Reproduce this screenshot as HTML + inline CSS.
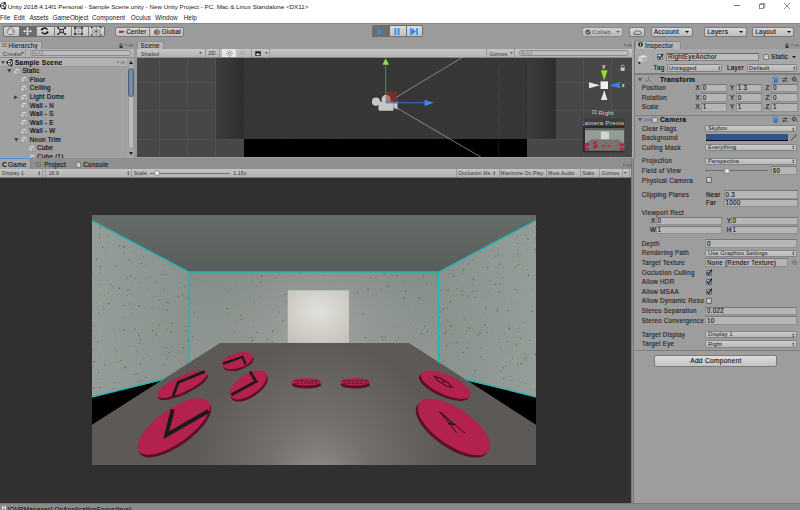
<!DOCTYPE html>
<html><head><meta charset="utf-8">
<style>
*{margin:0;padding:0;box-sizing:border-box}
html,body{width:800px;height:510px;overflow:hidden;background:#9d9d9d;font-family:"Liberation Sans",sans-serif;color:#111}
.a{position:absolute}
.t{position:absolute;white-space:nowrap;line-height:1;letter-spacing:0.15px;-webkit-text-stroke:0.12px currentColor}
.btn{position:absolute;border:1px solid #7a7a7a;border-radius:2px;background:linear-gradient(#dedede,#c4c4c4)}
.fld{position:absolute;border:1px solid #8c8c8c;border-top-color:#6f6f6f;background:#b4b4b4}
.drp{position:absolute;border:1px solid #868686;border-radius:2px;background:linear-gradient(#cdcdcd,#b9b9b9)}
svg{position:absolute;overflow:visible}
</style></head><body>
<div class="a" style="left:0px;top:0px;width:800px;height:22.5px;background:#fff"></div>
<svg style="left:-0.6px;top:1.6px" width="7.6" height="7.6" viewBox="0 0 14 14"><polygon points="1.2,7 5,2.2 11,1 13,7 11,13 5,11.8" fill="#f4f4f4" stroke="#222" stroke-width="1.6" stroke-linejoin="round"/><path d="M8.4,7 L1.2,7 M8.4,7 L11,1 M8.4,7 L11,13" stroke="#222" stroke-width="1.6"/><circle cx="1.6" cy="7" r="1.3" fill="#000"/><circle cx="11" cy="1.6" r="1.3" fill="#000"/><circle cx="11" cy="12.4" r="1.3" fill="#000"/></svg>
<div class="t" style="left:7.7px;top:4.12px;font-size:6.24px;color:#1a1a1a;letter-spacing:0;-webkit-text-stroke:0">Unity 2018.4.14f1 Personal - Sample Scene.unity - New Unity Project - PC, Mac &amp; Linux Standalone &lt;DX11&gt;</div>
<div class="a" style="left:734.2px;top:5.2px;width:5.8px;height:0.9px;background:#777"></div>
<svg style="left:758.8px;top:2.8px" width="6.4" height="6" viewBox="0 0 12.8 12"><rect x="1" y="3.2" width="8" height="8" fill="none" stroke="#666" stroke-width="1.5"/><path d="M3.5,3.2 V1 H11.8 V8.8 H9" fill="none" stroke="#666" stroke-width="1.4"/></svg>
<svg style="left:784px;top:2.7px" width="6" height="6" viewBox="0 0 6 6"><path d="M0,0 L6,6 M6,0 L0,6" stroke="#666" stroke-width="0.75"/></svg>
<div class="t" style="left:0px;top:15.18px;font-size:6.40px;color:#1a1a1a;letter-spacing:0;-webkit-text-stroke:0">File</div>
<div class="t" style="left:13.8px;top:15.18px;font-size:6.40px;color:#1a1a1a;letter-spacing:0;-webkit-text-stroke:0">Edit</div>
<div class="t" style="left:29.4px;top:15.18px;font-size:6.40px;color:#1a1a1a;letter-spacing:0;-webkit-text-stroke:0">Assets</div>
<div class="t" style="left:52.5px;top:15.18px;font-size:6.40px;color:#1a1a1a;letter-spacing:0;-webkit-text-stroke:0">GameObject</div>
<div class="t" style="left:92px;top:15.18px;font-size:6.40px;color:#1a1a1a;letter-spacing:0;-webkit-text-stroke:0">Component</div>
<div class="t" style="left:130.75px;top:15.18px;font-size:6.40px;color:#1a1a1a;letter-spacing:0;-webkit-text-stroke:0">Oculus</div>
<div class="t" style="left:155px;top:15.18px;font-size:6.40px;color:#1a1a1a;letter-spacing:0;-webkit-text-stroke:0">Window</div>
<div class="t" style="left:183.75px;top:15.18px;font-size:6.40px;color:#1a1a1a;letter-spacing:0;-webkit-text-stroke:0">Help</div>
<div class="a" style="left:0px;top:22.5px;width:800px;height:17.5px;background:#9b9b9b"></div>
<div class="a" style="left:0px;top:22.5px;width:800px;height:0.8px;background:#8a8a8a"></div>
<div class="a" style="left:2.5px;top:25.6px;width:102px;height:11.6px;border:1px solid #6e6e6e;border-radius:2px;background:linear-gradient(#dcdcdc,#c0c0c0)"></div>
<div class="a" style="left:19px;top:25.6px;width:0.8px;height:11.6px;background:#7a7a7a"></div>
<div class="a" style="left:36px;top:25.6px;width:0.8px;height:11.6px;background:#7a7a7a"></div>
<div class="a" style="left:53.5px;top:25.6px;width:0.8px;height:11.6px;background:#7a7a7a"></div>
<div class="a" style="left:70.5px;top:25.6px;width:0.8px;height:11.6px;background:#7a7a7a"></div>
<div class="a" style="left:87.5px;top:25.6px;width:0.8px;height:11.6px;background:#7a7a7a"></div>
<div class="a" style="left:19.2px;top:26.4px;width:16.6px;height:10.2px;background:#6b6b6b"></div>
<svg style="left:5.8px;top:27.4px" width="9.6" height="8" viewBox="0 0 19.2 16"><path d="M5,15 C3,13 1.5,10.5 1.5,8 C1.5,6.5 3,6 4,7 L4.5,8 L4.5,3.5 C4.5,2.2 6.5,2.2 6.5,3.5 L6.8,2 C7,0.8 9,0.8 9,2 L9.2,2.2 C9.4,1 11.4,1 11.4,2.4 L11.6,3.4 C12,2.3 13.8,2.5 13.8,3.8 L14,9 L15.5,7.3 C16.5,6.3 18,7.3 17.2,8.5 L13,15 Z" fill="#d4d4d4" stroke="#6a6a6a" stroke-width="1.5"/></svg>
<svg style="left:22.8px;top:26.9px" width="9" height="8.4" viewBox="0 0 18 16.8"><path d="M9,2 V14.8 M2,8.4 H16" stroke="#f2f2f2" stroke-width="1.8"/><path d="M9,0 L12,3.6 L6,3.6Z M9,16.8 L12,13.2 L6,13.2Z M0,8.4 L3.6,5.4 L3.6,11.4Z M18,8.4 L14.4,5.4 L14.4,11.4Z" fill="#f2f2f2"/></svg>
<svg style="left:40px;top:26px" width="9" height="9" viewBox="40 26 9 9"><path d="M41.5,29.8 Q44.6,26.3 47.6,29.6" fill="none" stroke="#111" stroke-width="1.3"/><path d="M41.8,32.2 Q44.6,35.6 47.6,32.2" fill="none" stroke="#111" stroke-width="1.3"/><circle cx="41.7" cy="29.6" r="0.95" fill="#000"/><circle cx="47.5" cy="32.3" r="0.95" fill="#000"/></svg>
<svg style="left:57px;top:27px" width="9.2" height="8" viewBox="0 0 18.4 16"><rect x="5.8" y="4.6" width="6.8" height="6.8" fill="none" stroke="#111" stroke-width="1.8"/><path d="M8.2,9.5 L9.2,6.8 L10.2,9.5Z" fill="#111"/><path d="M2,1.6 L5.8,4.6 M16.4,1.6 L12.6,4.6 M2,14.4 L5.8,11.4 M16.4,14.4 L12.6,11.4" stroke="#111" stroke-width="1.6"/><circle cx="2" cy="1.8" r="1.8" fill="#111"/><circle cx="16.4" cy="1.8" r="1.8" fill="#111"/><circle cx="2" cy="14.2" r="1.8" fill="#111"/><circle cx="16.4" cy="14.2" r="1.8" fill="#111"/></svg>
<svg style="left:74.2px;top:27px" width="9" height="8" viewBox="0 0 18 16"><rect x="2" y="2" width="14" height="12" fill="none" stroke="#222" stroke-width="1.3"/><circle cx="2" cy="2" r="1.8" fill="#111"/><circle cx="16" cy="2" r="1.8" fill="#111"/><circle cx="2" cy="14" r="1.8" fill="#111"/><circle cx="16" cy="14" r="1.8" fill="#111"/><circle cx="9" cy="8" r="1.6" fill="none" stroke="#666" stroke-width="1.1"/></svg>
<svg style="left:90.6px;top:27px" width="10.4" height="8.6" viewBox="0 0 20.8 17.2"><path d="M10.4,1.5 L19,8.6 L10.4,15.7 L1.8,8.6Z" fill="none" stroke="#222" stroke-width="1.4" stroke-dasharray="2.4,1.6"/><path d="M10.4,5 V12.2 M6.8,8.6 H14" stroke="#444" stroke-width="1.6"/><path d="M0,0 L4.5,0 L0,4Z M20.8,0 L16.3,0 L20.8,4Z M0,17.2 L4.5,17.2 L0,13.2Z M20.8,17.2 L16.3,17.2 L20.8,13.2Z" fill="#222"/></svg>
<div class="a" style="left:115.4px;top:26.8px;width:68.2px;height:9.8px;border:1px solid #7a7a7a;border-radius:2px;background:linear-gradient(#d8d8d8,#bdbdbd)"></div>
<div class="a" style="left:149px;top:27.3px;width:0.8px;height:8.8px;background:#7a7a7a"></div>
<svg style="left:119.3px;top:29.8px" width="6" height="3.6" viewBox="0 0 12 7.2"><rect x="0" y="1.5" width="4.5" height="4.2" fill="#444"/><path d="M5,0.5 L12,3.6 L5,6.7Z" fill="#b02828"/><rect x="3" y="2.6" width="4" height="2" fill="#b02828"/></svg>
<div class="t" style="left:126.3px;top:29.39px;font-size:6.27px;letter-spacing:0.26px;color:#111">Center</div>
<svg style="left:153.6px;top:28.7px" width="6" height="6" viewBox="0 0 12 12"><circle cx="6" cy="6" r="5" fill="#8a8a8a" stroke="#444" stroke-width="1"/><path d="M6,1 A5,5 0 0 0 6,11 A2.6,5 0 0 1 6,1Z" fill="#c02a2a"/></svg>
<div class="t" style="left:161.4px;top:29.39px;font-size:6.27px;letter-spacing:0.26px;color:#111">Global</div>
<div class="a" style="left:371.5px;top:25.3px;width:51px;height:12px;border:1px solid #6e6e6e;border-radius:2px;background:linear-gradient(#dcdcdc,#c2c2c2)"></div>
<div class="a" style="left:372px;top:25.8px;width:17px;height:11px;background:#6d6d6d"></div>
<div class="a" style="left:388.7px;top:25.5px;width:0.8px;height:11.5px;background:#6e6e6e"></div>
<div class="a" style="left:405.7px;top:25.5px;width:0.8px;height:11.5px;background:#6e6e6e"></div>
<svg style="left:376.5px;top:28px" width="7" height="7" viewBox="0 0 7 7"><path d="M0.5,0 L6.5,3.5 L0.5,7Z" fill="#2d8ce6"/></svg>
<svg style="left:394px;top:28px" width="6" height="7" viewBox="0 0 6 7"><rect x="0.5" y="0" width="1.8" height="7" fill="#2d8ce6"/><rect x="3.7" y="0" width="1.8" height="7" fill="#2d8ce6"/></svg>
<svg style="left:410px;top:28px" width="8" height="7" viewBox="0 0 8 7"><rect x="0" y="0" width="1.6" height="7" fill="#2d8ce6"/><path d="M1.6,0 L6.2,3.5 L1.6,7Z" fill="#2d8ce6"/><rect x="6.2" y="0" width="1.6" height="7" fill="#2d8ce6"/></svg>
<div class="a" style="left:581.5px;top:27px;width:41.5px;height:9.6px;border:1px solid #8a8a8a;border-radius:2px;background:linear-gradient(#cfcfcf,#b8b8b8)"></div>
<svg style="left:584.5px;top:28.8px" width="6" height="6" viewBox="0 0 12 12"><circle cx="6" cy="6" r="5.2" fill="#555"/><path d="M3,6 L5.2,8.2 L9,3.8" stroke="#ddd" stroke-width="1.6" fill="none"/></svg>
<div class="t" style="left:592px;top:29.35px;font-size:6.08px;letter-spacing:0.26px;color:#666">Collab</div>
<svg style="left:616px;top:31px" width="4" height="2" viewBox="0 0 4 2"><path d="M0,0 L4,0 L2,2Z" fill="#666"/></svg>
<div class="a" style="left:629px;top:27px;width:15.5px;height:9.6px;border:1px solid #7a7a7a;border-radius:2px;background:linear-gradient(#d8d8d8,#bdbdbd)"></div>
<svg style="left:632.5px;top:28.5px" width="9" height="6" viewBox="0 0 18 12"><path d="M4,11 C1,11 1,7 4,7 C4,3 9,2 11,5 C13,3 16,5 15,7 C18,7 18,11 15,11 Z" fill="none" stroke="#333" stroke-width="1.3"/></svg>
<div class="a" style="left:650.6px;top:27px;width:42.10000000000002px;height:9.6px;border:1px solid #7a7a7a;border-radius:2px;background:linear-gradient(#d8d8d8,#bdbdbd)"></div>
<div class="t" style="left:653.8000000000001px;top:29.23px;font-size:6.46px;letter-spacing:0.26px;color:#111">Account</div>
<svg style="left:685.2px;top:31px" width="4" height="2" viewBox="0 0 4 2"><path d="M0,0 L4,0 L2,2Z" fill="#111"/></svg>
<div class="a" style="left:704px;top:27px;width:42.5px;height:9.6px;border:1px solid #7a7a7a;border-radius:2px;background:linear-gradient(#d8d8d8,#bdbdbd)"></div>
<div class="t" style="left:707.2px;top:29.23px;font-size:6.46px;letter-spacing:0.26px;color:#111">Layers</div>
<svg style="left:739.0px;top:31px" width="4" height="2" viewBox="0 0 4 2"><path d="M0,0 L4,0 L2,2Z" fill="#111"/></svg>
<div class="a" style="left:752px;top:27px;width:42px;height:9.6px;border:1px solid #7a7a7a;border-radius:2px;background:linear-gradient(#d8d8d8,#bdbdbd)"></div>
<div class="t" style="left:755.2px;top:29.23px;font-size:6.46px;letter-spacing:0.26px;color:#111">Layout</div>
<svg style="left:786.5px;top:31px" width="4" height="2" viewBox="0 0 4 2"><path d="M0,0 L4,0 L2,2Z" fill="#111"/></svg>
<div class="a" style="left:0px;top:40px;width:135px;height:118px;background:#a0a0a0"></div>
<div class="a" style="left:0px;top:40px;width:135px;height:8.6px;background:#9b9b9b"></div>
<div class="a" style="left:0px;top:40.6px;width:42px;height:8px;background:#b6b6b6;border:0.8px solid #8c8c8c;border-bottom:none;border-left:none;border-radius:0 2px 0 0"></div>
<svg style="left:2px;top:42.5px" width="5" height="4" viewBox="0 0 10 8"><path d="M0,1 H10 M0,4 H10 M0,7 H10" stroke="#666" stroke-width="1.3"/></svg>
<div class="t" style="left:8.4px;top:42.51px;font-size:6.37px;letter-spacing:0.26px;color:#222">Hierarchy</div>
<svg style="left:119px;top:42.6px" width="4" height="5" viewBox="0 0 8 10"><path d="M2,5 V3 A2,2 0 0 1 6,3 V5" fill="none" stroke="#333" stroke-width="1.3"/><rect x="1" y="5" width="6" height="5" fill="#333"/></svg>
<svg style="left:125px;top:44px" width="8" height="3" viewBox="0 0 16 6"><path d="M0,1 L4,1 L2,4Z" fill="#444"/><path d="M7,1 H16 M7,3 H16 M7,5 H16" stroke="#666" stroke-width="1"/></svg>
<div class="a" style="left:0px;top:48.5px;width:135px;height:9.1px;background:#b4b4b4;border-bottom:0.8px solid #8a8a8a"></div>
<div class="t" style="left:2.6px;top:50.55px;font-size:6.20px;color:#444;-webkit-text-stroke:0">Create</div>
<svg style="left:20.5px;top:52.3px" width="3" height="2" viewBox="0 0 4 2"><path d="M0,0 L4,0 L2,2Z" fill="#333"/></svg>
<div class="a" style="left:25.2px;top:49px;width:0.8px;height:8px;background:#999"></div>
<div class="a" style="left:29.8px;top:49.9px;width:101.5px;height:6.6px;border:0.8px solid #8a8a8a;border-radius:3.3px;background:#bdbdbd"></div>
<svg style="left:31.5px;top:51px" width="5" height="4.5" viewBox="0 0 10 9"><circle cx="3.5" cy="4" r="2.6" fill="none" stroke="#666" stroke-width="1.1"/><path d="M6,4 L8,6 L10,4Z" fill="#666"/></svg>
<div class="t" style="left:37px;top:51.33px;font-size:5.40px;color:#888;-webkit-text-stroke:0">All</div>
<div class="a" style="left:0px;top:57.6px;width:127px;height:9.3px;background:#b3b3b3;border-bottom:0.6px solid #999"></div>
<svg style="left:0.5px;top:60.5px" width="4" height="3.5" viewBox="0 0 8 7"><path d="M0,0 L8,0 L4,7Z" fill="#555"/></svg>
<svg style="left:5.8px;top:58.5px" width="7.2" height="7.2" viewBox="0 0 14 14"><polygon points="1.2,7 5,2.2 11,1 13,7 11,13 5,11.8" fill="#e8e8e8" stroke="#111" stroke-width="1.7" stroke-linejoin="round"/><path d="M8.4,7 L1.2,7 M8.4,7 L11,1 M8.4,7 L11,13" stroke="#111" stroke-width="1.7"/><circle cx="1.6" cy="7" r="1.3" fill="#000"/><circle cx="11" cy="1.6" r="1.3" fill="#000"/><circle cx="11" cy="12.4" r="1.3" fill="#000"/></svg>
<div class="t" style="left:14.9px;top:59.55px;font-size:6.55px;letter-spacing:0.26px;font-weight:bold;color:#111">Sample Scene</div>
<svg style="left:116.5px;top:61px" width="8" height="3" viewBox="0 0 16 6"><path d="M0,1 L4,1 L2,4Z" fill="#444"/><path d="M7,1 H16 M7,3 H16 M7,5 H16" stroke="#777" stroke-width="1"/></svg>
<div class="a" style="left:127px;top:57.6px;width:7.5px;height:100.4px;background:#a4a4a4"></div>
<div class="a" style="left:127.8px;top:65px;width:5.8px;height:84px;background:#bcbcbc;border:0.6px solid #999;border-radius:3px"></div>
<svg style="left:129px;top:60.8px" width="4" height="3" viewBox="0 0 8 6"><path d="M0,6 L8,6 L4,0Z" fill="#222"/></svg>
<svg style="left:129px;top:152.3px" width="4" height="3" viewBox="0 0 8 6"><path d="M0,0 L8,0 L4,6Z" fill="#222"/></svg>
<div class="a" style="left:127.6px;top:67.6px;width:6.2px;height:29.6px;border:0.8px solid #4f6076;border-radius:3px;background:linear-gradient(90deg,#62799a,#8397b2,#62799a)"></div>
<div class="a" style="left:134.2px;top:40px;width:2.8px;height:118px;background:#989898"></div>
<svg style="left:6.5px;top:69.3px" width="4.6" height="3.8" viewBox="0 0 8 7"><path d="M0,0 L8,0 L4,7Z" fill="#444"/></svg>
<svg style="left:12.8px;top:67.8px" width="8.6" height="7.05" viewBox="0 0 16 13.1"><path d="M8,0.6 L15.4,3.2 L8,5.8 L0.6,3.2Z" fill="#dcdcdc"/><path d="M0.6,3.2 L8,5.8 L8,12.6 L0.6,10Z" fill="#c6c6c6"/><path d="M15.4,3.2 L8,5.8 L8,12.6 L15.4,10Z" fill="#b2b2b2"/><path d="M8,0.6 L15.4,3.2 L15.4,10 L8,12.6 L0.6,10 L0.6,3.2Z M0.6,3.2 L8,5.8 L15.4,3.2 M8,5.8 V12.6" fill="none" stroke="#7a7a7a" stroke-width="0.8"/></svg>
<div class="t" style="left:22.4px;top:68.19px;font-size:6.27px;letter-spacing:0.26px;color:#111;-webkit-text-stroke:0.2px #111">Static</div>
<svg style="left:20.2px;top:76.38px" width="8.6" height="7.05" viewBox="0 0 16 13.1"><path d="M8,0.6 L15.4,3.2 L8,5.8 L0.6,3.2Z" fill="#dcdcdc"/><path d="M0.6,3.2 L8,5.8 L8,12.6 L0.6,10Z" fill="#c6c6c6"/><path d="M15.4,3.2 L8,5.8 L8,12.6 L15.4,10Z" fill="#b2b2b2"/><path d="M8,0.6 L15.4,3.2 L15.4,10 L8,12.6 L0.6,10 L0.6,3.2Z M0.6,3.2 L8,5.8 L15.4,3.2 M8,5.8 V12.6" fill="none" stroke="#7a7a7a" stroke-width="0.8"/></svg>
<div class="t" style="left:29.799999999999997px;top:76.77px;font-size:6.27px;letter-spacing:0.26px;color:#111;-webkit-text-stroke:0.2px #111">Floor</div>
<svg style="left:20.2px;top:84.96px" width="8.6" height="7.05" viewBox="0 0 16 13.1"><path d="M8,0.6 L15.4,3.2 L8,5.8 L0.6,3.2Z" fill="#dcdcdc"/><path d="M0.6,3.2 L8,5.8 L8,12.6 L0.6,10Z" fill="#c6c6c6"/><path d="M15.4,3.2 L8,5.8 L8,12.6 L15.4,10Z" fill="#b2b2b2"/><path d="M8,0.6 L15.4,3.2 L15.4,10 L8,12.6 L0.6,10 L0.6,3.2Z M0.6,3.2 L8,5.8 L15.4,3.2 M8,5.8 V12.6" fill="none" stroke="#7a7a7a" stroke-width="0.8"/></svg>
<div class="t" style="left:29.799999999999997px;top:85.35px;font-size:6.27px;letter-spacing:0.26px;color:#111;-webkit-text-stroke:0.2px #111">Ceiling</div>
<svg style="left:14.399999999999999px;top:94.64px" width="3.8" height="4.6" viewBox="0 0 7 8"><path d="M0,0 L7,4 L0,8Z" fill="#444"/></svg>
<svg style="left:20.2px;top:93.53999999999999px" width="8.6" height="7.05" viewBox="0 0 16 13.1"><path d="M8,0.6 L15.4,3.2 L8,5.8 L0.6,3.2Z" fill="#dcdcdc"/><path d="M0.6,3.2 L8,5.8 L8,12.6 L0.6,10Z" fill="#c6c6c6"/><path d="M15.4,3.2 L8,5.8 L8,12.6 L15.4,10Z" fill="#b2b2b2"/><path d="M8,0.6 L15.4,3.2 L15.4,10 L8,12.6 L0.6,10 L0.6,3.2Z M0.6,3.2 L8,5.8 L15.4,3.2 M8,5.8 V12.6" fill="none" stroke="#7a7a7a" stroke-width="0.8"/></svg>
<div class="t" style="left:29.799999999999997px;top:93.93px;font-size:6.27px;letter-spacing:0.26px;color:#111;-webkit-text-stroke:0.2px #111">Light Dome</div>
<svg style="left:20.2px;top:102.12px" width="8.6" height="7.05" viewBox="0 0 16 13.1"><path d="M8,0.6 L15.4,3.2 L8,5.8 L0.6,3.2Z" fill="#dcdcdc"/><path d="M0.6,3.2 L8,5.8 L8,12.6 L0.6,10Z" fill="#c6c6c6"/><path d="M15.4,3.2 L8,5.8 L8,12.6 L15.4,10Z" fill="#b2b2b2"/><path d="M8,0.6 L15.4,3.2 L15.4,10 L8,12.6 L0.6,10 L0.6,3.2Z M0.6,3.2 L8,5.8 L15.4,3.2 M8,5.8 V12.6" fill="none" stroke="#7a7a7a" stroke-width="0.8"/></svg>
<div class="t" style="left:29.799999999999997px;top:102.51px;font-size:6.27px;letter-spacing:0.26px;color:#111;-webkit-text-stroke:0.2px #111">Wall - N</div>
<svg style="left:20.2px;top:110.69999999999999px" width="8.6" height="7.05" viewBox="0 0 16 13.1"><path d="M8,0.6 L15.4,3.2 L8,5.8 L0.6,3.2Z" fill="#dcdcdc"/><path d="M0.6,3.2 L8,5.8 L8,12.6 L0.6,10Z" fill="#c6c6c6"/><path d="M15.4,3.2 L8,5.8 L8,12.6 L15.4,10Z" fill="#b2b2b2"/><path d="M8,0.6 L15.4,3.2 L15.4,10 L8,12.6 L0.6,10 L0.6,3.2Z M0.6,3.2 L8,5.8 L15.4,3.2 M8,5.8 V12.6" fill="none" stroke="#7a7a7a" stroke-width="0.8"/></svg>
<div class="t" style="left:29.799999999999997px;top:111.09px;font-size:6.27px;letter-spacing:0.26px;color:#111;-webkit-text-stroke:0.2px #111">Wall - S</div>
<svg style="left:20.2px;top:119.28px" width="8.6" height="7.05" viewBox="0 0 16 13.1"><path d="M8,0.6 L15.4,3.2 L8,5.8 L0.6,3.2Z" fill="#dcdcdc"/><path d="M0.6,3.2 L8,5.8 L8,12.6 L0.6,10Z" fill="#c6c6c6"/><path d="M15.4,3.2 L8,5.8 L8,12.6 L15.4,10Z" fill="#b2b2b2"/><path d="M8,0.6 L15.4,3.2 L15.4,10 L8,12.6 L0.6,10 L0.6,3.2Z M0.6,3.2 L8,5.8 L15.4,3.2 M8,5.8 V12.6" fill="none" stroke="#7a7a7a" stroke-width="0.8"/></svg>
<div class="t" style="left:29.799999999999997px;top:119.67px;font-size:6.27px;letter-spacing:0.26px;color:#111;-webkit-text-stroke:0.2px #111">Wall - E</div>
<svg style="left:20.2px;top:127.85999999999999px" width="8.6" height="7.05" viewBox="0 0 16 13.1"><path d="M8,0.6 L15.4,3.2 L8,5.8 L0.6,3.2Z" fill="#dcdcdc"/><path d="M0.6,3.2 L8,5.8 L8,12.6 L0.6,10Z" fill="#c6c6c6"/><path d="M15.4,3.2 L8,5.8 L8,12.6 L15.4,10Z" fill="#b2b2b2"/><path d="M8,0.6 L15.4,3.2 L15.4,10 L8,12.6 L0.6,10 L0.6,3.2Z M0.6,3.2 L8,5.8 L15.4,3.2 M8,5.8 V12.6" fill="none" stroke="#7a7a7a" stroke-width="0.8"/></svg>
<div class="t" style="left:29.799999999999997px;top:128.25px;font-size:6.27px;letter-spacing:0.26px;color:#111;-webkit-text-stroke:0.2px #111">Wall - W</div>
<svg style="left:13.899999999999999px;top:137.94px" width="4.6" height="3.8" viewBox="0 0 8 7"><path d="M0,0 L8,0 L4,7Z" fill="#444"/></svg>
<svg style="left:20.2px;top:136.44px" width="8.6" height="7.05" viewBox="0 0 16 13.1"><path d="M8,0.6 L15.4,3.2 L8,5.8 L0.6,3.2Z" fill="#dcdcdc"/><path d="M0.6,3.2 L8,5.8 L8,12.6 L0.6,10Z" fill="#c6c6c6"/><path d="M15.4,3.2 L8,5.8 L8,12.6 L15.4,10Z" fill="#b2b2b2"/><path d="M8,0.6 L15.4,3.2 L15.4,10 L8,12.6 L0.6,10 L0.6,3.2Z M0.6,3.2 L8,5.8 L15.4,3.2 M8,5.8 V12.6" fill="none" stroke="#7a7a7a" stroke-width="0.8"/></svg>
<div class="t" style="left:29.799999999999997px;top:136.83px;font-size:6.27px;letter-spacing:0.26px;color:#111;-webkit-text-stroke:0.2px #111">Neon Trim</div>
<svg style="left:27.6px;top:145.02px" width="8.6" height="7.05" viewBox="0 0 16 13.1"><path d="M8,0.6 L15.4,3.2 L8,5.8 L0.6,3.2Z" fill="#dcdcdc"/><path d="M0.6,3.2 L8,5.8 L8,12.6 L0.6,10Z" fill="#c6c6c6"/><path d="M15.4,3.2 L8,5.8 L8,12.6 L15.4,10Z" fill="#b2b2b2"/><path d="M8,0.6 L15.4,3.2 L15.4,10 L8,12.6 L0.6,10 L0.6,3.2Z M0.6,3.2 L8,5.8 L15.4,3.2 M8,5.8 V12.6" fill="none" stroke="#7a7a7a" stroke-width="0.8"/></svg>
<div class="t" style="left:37.2px;top:145.41px;font-size:6.27px;letter-spacing:0.26px;color:#111;-webkit-text-stroke:0.2px #111">Cube</div>
<svg style="left:27.6px;top:153.6px" width="8.6" height="7.05" viewBox="0 0 16 13.1"><path d="M8,0.6 L15.4,3.2 L8,5.8 L0.6,3.2Z" fill="#dcdcdc"/><path d="M0.6,3.2 L8,5.8 L8,12.6 L0.6,10Z" fill="#c6c6c6"/><path d="M15.4,3.2 L8,5.8 L8,12.6 L15.4,10Z" fill="#b2b2b2"/><path d="M8,0.6 L15.4,3.2 L15.4,10 L8,12.6 L0.6,10 L0.6,3.2Z M0.6,3.2 L8,5.8 L15.4,3.2 M8,5.8 V12.6" fill="none" stroke="#7a7a7a" stroke-width="0.8"/></svg>
<div class="t" style="left:37.2px;top:153.99px;font-size:6.27px;letter-spacing:0.26px;color:#111;-webkit-text-stroke:0.2px #111">Cube (1)</div>
<div class="a" style="left:137px;top:40px;width:497px;height:18px;background:#9b9b9b"></div>
<div class="a" style="left:137px;top:40.6px;width:27px;height:8px;background:#b6b6b6;border:0.8px solid #8c8c8c;border-bottom:none;border-radius:2px 2px 0 0"></div>
<div class="t" style="left:140.5px;top:42.51px;font-size:6.37px;letter-spacing:0.26px;color:#222">Scene</div>
<svg style="left:624px;top:44px" width="8" height="3" viewBox="0 0 16 6"><path d="M0,1 L4,1 L2,4Z" fill="#444"/><path d="M7,1 H16 M7,3 H16 M7,5 H16" stroke="#666" stroke-width="1"/></svg>
<div class="a" style="left:137px;top:48.6px;width:495px;height:9px;background:linear-gradient(#c6c6c6,#b4b4b4);border-bottom:0.8px solid #8a8a8a"></div>
<div class="t" style="left:141px;top:51.67px;font-size:5.00px;color:#333;-webkit-text-stroke:0;letter-spacing:0.15px">Shaded</div>
<svg style="left:198.6px;top:52.4px" width="3" height="2" viewBox="0 0 4 2"><path d="M0,0 L4,0 L2,2Z" fill="#333"/></svg>
<div class="a" style="left:204.7px;top:48.8px;width:0.6px;height:8.6px;background:#999"></div>
<div class="t" style="left:208.3px;top:51.26px;font-size:5.60px;color:#333;-webkit-text-stroke:0;letter-spacing:0.15px">2D</div>
<div class="a" style="left:219px;top:48.8px;width:0.6px;height:8.6px;background:#999"></div>
<div class="a" style="left:222px;top:49px;width:14px;height:8.3px;background:#e6e6e6"></div>
<svg style="left:225.5px;top:50px" width="7" height="7" viewBox="0 0 14 14"><circle cx="7" cy="7" r="2.3" fill="none" stroke="#555" stroke-width="1.2"/><path d="M7,0.5 V3 M7,11 V13.5 M0.5,7 H3 M11,7 H13.5 M2.4,2.4 L4,4 M10,10 L11.6,11.6 M2.4,11.6 L4,10 M10,4 L11.6,2.4" stroke="#555" stroke-width="1.1"/></svg>
<svg style="left:239px;top:50.3px" width="8" height="6" viewBox="0 0 16 12"><path d="M1,4 H4 L8,1 V11 L4,8 H1Z" fill="#aaa"/><path d="M10,3 Q13,6 10,9 M12,1.5 Q16,6 12,10.5" stroke="#aaa" fill="none" stroke-width="1"/></svg>
<div class="a" style="left:250.5px;top:48.8px;width:0.6px;height:8.6px;background:#999"></div>
<svg style="left:254.5px;top:50.8px" width="6" height="5" viewBox="0 0 12 10"><rect x="0.5" y="0.5" width="11" height="9" fill="#222"/><path d="M2,8 L5,4 L7,6 L8,5 L10,8Z" fill="#eee"/></svg>
<svg style="left:265px;top:52.4px" width="3" height="2" viewBox="0 0 4 2"><path d="M0,0 L4,0 L2,2Z" fill="#333"/></svg>
<div class="a" style="left:269px;top:48.8px;width:0.6px;height:8.6px;background:#999"></div>
<div class="a" style="left:486px;top:48.8px;width:0.6px;height:8.6px;background:#999"></div>
<div class="t" style="left:489.5px;top:51.67px;font-size:5.00px;color:#333;-webkit-text-stroke:0;letter-spacing:0.15px">Gizmos</div>
<svg style="left:510px;top:52.4px" width="3" height="2" viewBox="0 0 4 2"><path d="M0,0 L4,0 L2,2Z" fill="#333"/></svg>
<div class="a" style="left:514px;top:48.8px;width:0.6px;height:8.6px;background:#999"></div>
<div class="a" style="left:519px;top:49.9px;width:109.5px;height:6.6px;border:0.8px solid #8a8a8a;border-radius:3.3px;background:#bdbdbd"></div>
<svg style="left:520.5px;top:51px" width="5" height="4.5" viewBox="0 0 10 9"><circle cx="3.5" cy="4" r="2.6" fill="none" stroke="#666" stroke-width="1.1"/><path d="M6,4 L8,6 L10,4Z" fill="#666"/></svg>
<div class="t" style="left:526px;top:51.33px;font-size:5.40px;color:#888;-webkit-text-stroke:0">All</div>
<div class="a" style="left:137px;top:57.6px;width:495px;height:99.7px;background:#474747"></div>
<div class="a" style="left:159.29999999999998px;top:57.6px;width:0.8px;height:99.7px;background:#505050"></div>
<div class="a" style="left:186.6px;top:57.6px;width:0.8px;height:99.7px;background:#505050"></div>
<div class="a" style="left:215.29999999999998px;top:57.6px;width:0.8px;height:99.7px;background:#505050"></div>
<div class="a" style="left:582.6px;top:57.6px;width:0.8px;height:99.7px;background:#505050"></div>
<div class="a" style="left:611.4px;top:57.6px;width:0.8px;height:99.7px;background:#505050"></div>
<div class="a" style="left:137px;top:82.0px;width:495px;height:0.8px;background:#505050"></div>
<div class="a" style="left:137px;top:110.19999999999999px;width:495px;height:0.8px;background:#505050"></div>
<div class="a" style="left:137px;top:138.6px;width:495px;height:0.8px;background:#505050"></div>
<div class="a" style="left:215.7px;top:57.6px;width:28.3px;height:81.4px;background:linear-gradient(90deg,#3c3c3c,#2e2e2e)"></div>
<div class="a" style="left:527.4px;top:57.6px;width:28.4px;height:81.4px;background:linear-gradient(90deg,#3c3c3c,#2e2e2e)"></div>
<div class="a" style="left:244px;top:57.6px;width:283.4px;height:81px;background-color:#373737;background-image:radial-gradient(circle at 2px 2px,#303030 0.5px,transparent 0.9px),radial-gradient(circle at 6px 8px,#313131 0.5px,transparent 0.9px);background-size:9.5px 12px"></div>
<div class="a" style="left:498.2px;top:57.6px;width:0.7px;height:81px;background:#3d3d3d"></div>
<div class="a" style="left:244px;top:138.6px;width:283.4px;height:18.7px;background:#000"></div>
<div class="a" style="left:498.2px;top:138.6px;width:0.7px;height:18.7px;background:#151515"></div>
<svg style="left:137px;top:57.6px" width="495" height="99.7" viewBox="137 57.6 495 99.7"><path d="M396,97 L464,56 M396,107 L483,158" stroke="#a8a8a8" stroke-width="0.7" fill="none"/><path d="M385.7,64 V102.4" stroke="#6ea23c" stroke-width="0.8"/><path d="M385.7,57.8 L389,64.4 L382.4,64.4Z" fill="#8fe040"/><circle cx="376" cy="101.3" r="4.1" fill="#c8c8c8"/><circle cx="386.2" cy="99" r="4.6" fill="#c8c8c8"/><rect x="378.5" y="101" width="15" height="9.3" rx="1" fill="#c8c8c8"/><path d="M393.5,103 L397.5,100.5 L397.5,109 L393.5,107Z" fill="#c8c8c8"/><rect x="385.7" y="91" width="11.3" height="11.8" fill="#9a3020" opacity="0.55"/><path d="M385.7,102.4 H425" stroke="#3e78d8" stroke-width="0.9"/><path d="M433.8,102.4 L424.6,99.3 L424.6,105.5Z" fill="#3f86f0"/></svg>
<svg style="left:580px;top:60px" width="50" height="45" viewBox="580 60 50 45"><path d="M604.2,80.5 L600.8,70.3 L607.6,70.3Z" fill="#8ddc32"/><path d="M609.3,85.2 L620,82.2 L620,88.2Z" fill="#3b82f0"/><path d="M600,85.2 L589,82.2 L589,88.2Z" fill="#e8e8e8"/><path d="M604.2,90 L601,100 L607.4,100Z" fill="#e8e8e8"/><rect x="600.5" y="81.4" width="7.5" height="7.6" fill="#efefef"/><text x="602.2" y="68.3" font-size="5.6" font-weight="bold" fill="#eee" font-family="Liberation Sans">y</text><text x="621.8" y="87.2" font-size="5.6" font-weight="bold" fill="#eee" font-family="Liberation Sans">z</text><path d="M621.3,68 V66.5 A1.4,1.4 0 0 1 624.1,66.5 V68" stroke="#cfcfcf" stroke-width="0.7" fill="none"/><rect x="620.8" y="67.8" width="3.8" height="3" fill="#cfcfcf"/></svg>
<svg style="left:591.5px;top:110px" width="5" height="4" viewBox="0 0 10 8"><path d="M0,1 H10 M0,4 H10 M0,7 H10" stroke="#aaa" stroke-width="1.4"/></svg>
<div class="t" style="left:598.5px;top:110.15px;font-size:6.20px;color:#cfcfcf;-webkit-text-stroke:0">Right</div>
<div class="a" style="left:583.3px;top:118.8px;width:41.2px;height:33.4px;background:#2c2c2c;box-shadow:0 0 1px #222"></div>
<div class="a" style="left:583.3px;top:118.8px;width:41.2px;height:7.4px;background:#3d3d3d"></div>
<div class="a" style="left:583.3px;top:118.8px;width:41.2px;height:7.4px;overflow:hidden"><div class="t" style="left:-3.2px;top:1.2px;font-size:6px;color:#cfcfcf;letter-spacing:0.35px;-webkit-text-stroke:0">Camera Preview</div></div>
<svg style="left:584.5px;top:127.8px" width="39.2" height="22.4" viewBox="0 0 39.2 22.4"><rect width="39.2" height="22.4" fill="#959c97"/><rect width="39.2" height="2.2" fill="#5d6360"/><rect x="15.8" y="3.6" width="8.2" height="8" fill="#d5d3cd"/><path d="M6,11.6 H33 L39.2,15.5 V22.4 H0 V15.5Z" fill="#77726e"/><ellipse cx="2" cy="16.5" rx="2.6" ry="1.5" fill="#b7204f"/><ellipse cx="9.8" cy="14.8" rx="2.2" ry="1.3" fill="#b7204f" transform="rotate(-25 9.8 14.8)"/><ellipse cx="10.5" cy="18.5" rx="3" ry="1.7" fill="#b7204f" transform="rotate(-30 10.5 18.5)"/><ellipse cx="18.5" cy="18" rx="1.8" ry="0.8" fill="#b7204f"/><ellipse cx="24" cy="18" rx="1.8" ry="0.8" fill="#b7204f"/><ellipse cx="36.8" cy="16.8" rx="2.6" ry="1.5" fill="#b7204f"/><ellipse cx="2" cy="21" rx="2.5" ry="1.5" fill="#b7204f"/><ellipse cx="37" cy="21" rx="2.5" ry="1.5" fill="#b7204f"/></svg>
<div class="a" style="left:631.7px;top:40px;width:3px;height:118px;background:linear-gradient(90deg,#a6a6a6,#a6a6a6 60%,#7c7c7c 60%)"></div>
<div class="a" style="left:0px;top:158px;width:634px;height:10.8px;background:#8f8f8f"></div>
<div class="a" style="left:0px;top:158.6px;width:30.5px;height:10.4px;background:#a6a6a6;border-right:0.7px solid #7d7d7d"></div>
<div class="a" style="left:0px;top:158.4px;width:30.5px;height:1px;background:#4f8fe0"></div>
<svg style="left:1.5px;top:161.5px" width="5" height="5" viewBox="0 0 10 10"><path d="M8.5,2.5 A4,4 0 1 0 8.5,7.5" fill="none" stroke="#222" stroke-width="2.2"/></svg>
<div class="t" style="left:8.1px;top:162.03px;font-size:6.46px;letter-spacing:0.26px;color:#111">Game</div>
<svg style="left:36px;top:162.3px" width="5" height="4.5" viewBox="0 0 10 9"><path d="M0.5,1 H4 L5,2.2 H9.5 V8.5 H0.5Z" fill="none" stroke="#555" stroke-width="1.1"/></svg>
<div class="t" style="left:44.2px;top:162.03px;font-size:6.46px;letter-spacing:0.26px;color:#111">Project</div>
<svg style="left:76.4px;top:161.5px" width="4.8" height="5.5" viewBox="0 0 10 11"><rect x="0.6" y="0.6" width="8.8" height="9.8" fill="#ddd" stroke="#555" stroke-width="1.1"/><path d="M3,4 H7 M3,6.5 H7" stroke="#777" stroke-width="0.8"/></svg>
<div class="t" style="left:83.2px;top:162.03px;font-size:6.46px;letter-spacing:0.26px;color:#111">Console</div>
<svg style="left:623px;top:164px" width="8" height="3" viewBox="0 0 16 6"><path d="M0,1 L4,1 L2,4Z" fill="#444"/><path d="M7,1 H16 M7,3 H16 M7,5 H16" stroke="#666" stroke-width="1"/></svg>
<div class="a" style="left:0px;top:168.6px;width:632px;height:9px;background:linear-gradient(#c4c4c4,#b2b2b2);border-bottom:0.8px solid #7f7f7f"></div>
<div class="t" style="left:2px;top:171.17px;font-size:5.00px;color:#333;-webkit-text-stroke:0;letter-spacing:0.15px">Display 1</div>
<svg style="left:37.8px;top:171.3px" width="2.6" height="4.4" viewBox="0 0 4 8"><path d="M0,3.2 L2,0.4 L4,3.2Z M0,4.8 L2,7.6 L4,4.8Z" fill="#333"/></svg>
<div class="a" style="left:42.4px;top:168.8px;width:0.6px;height:8.5px;background:#999"></div>
<div class="a" style="left:44.6px;top:168.8px;width:0.6px;height:8.5px;background:#999"></div>
<div class="t" style="left:48.7px;top:171.17px;font-size:5.00px;color:#333;-webkit-text-stroke:0;letter-spacing:0.15px">16:9</div>
<svg style="left:126.8px;top:171.3px" width="2.6" height="4.4" viewBox="0 0 4 8"><path d="M0,3.2 L2,0.4 L4,3.2Z M0,4.8 L2,7.6 L4,4.8Z" fill="#333"/></svg>
<div class="a" style="left:130.5px;top:168.8px;width:0.6px;height:8.5px;background:#999"></div>
<div class="t" style="left:133.7px;top:171.27px;font-size:5.00px;color:#333;-webkit-text-stroke:0;letter-spacing:0.15px">Scale</div>
<div class="a" style="left:150px;top:172.6px;width:80px;height:1px;background:#6f6f6f;border-radius:1px"></div>
<svg style="left:154.4px;top:170.3px" width="6" height="6" viewBox="0 0 12 12"><circle cx="6" cy="6" r="5" fill="#e8e8e8" stroke="#666" stroke-width="1.2"/></svg>
<div class="t" style="left:233.3px;top:171.27px;font-size:5.00px;color:#333;-webkit-text-stroke:0;letter-spacing:0.15px">1.15x</div>
<div class="a" style="left:456px;top:168.8px;width:0.6px;height:8.5px;background:#999"></div>
<div class="a" style="left:498.7px;top:168.8px;width:0.6px;height:8.5px;background:#999"></div>
<div class="a" style="left:546.2px;top:168.8px;width:0.6px;height:8.5px;background:#999"></div>
<div class="a" style="left:579.5px;top:168.8px;width:0.6px;height:8.5px;background:#999"></div>
<div class="a" style="left:598.5px;top:168.8px;width:0.6px;height:8.5px;background:#999"></div>
<div class="a" style="left:621.5px;top:168.8px;width:0.6px;height:8.5px;background:#999"></div>
<div class="t" style="left:458.3px;top:171.17px;font-size:5.00px;color:#333;-webkit-text-stroke:0;letter-spacing:0.15px">Occlusion Me:</div>
<svg style="left:492.6px;top:171.3px" width="2.6" height="4.4" viewBox="0 0 4 8"><path d="M0,3.2 L2,0.4 L4,3.2Z M0,4.8 L2,7.6 L4,4.8Z" fill="#333"/></svg>
<div class="t" style="left:500.6px;top:171.17px;font-size:5.00px;color:#333;-webkit-text-stroke:0;letter-spacing:0.15px">Maximize On Play</div>
<div class="t" style="left:548px;top:171.17px;font-size:5.00px;color:#333;-webkit-text-stroke:0;letter-spacing:0.15px">Mute Audio</div>
<div class="t" style="left:582.3px;top:171.17px;font-size:5.00px;color:#333;-webkit-text-stroke:0;letter-spacing:0.15px">Stats</div>
<div class="t" style="left:601.5px;top:171.17px;font-size:5.00px;color:#333;-webkit-text-stroke:0;letter-spacing:0.15px">Gizmos</div>
<svg style="left:624px;top:172.2px" width="3" height="2" viewBox="0 0 4 2"><path d="M0,0 L4,0 L2,2Z" fill="#333"/></svg>
<div class="a" style="left:629.3px;top:168.8px;width:0.6px;height:8.5px;background:#999"></div>
<div class="a" style="left:0px;top:177.6px;width:630.7px;height:325px;background:#303030"></div>
<div class="a" style="left:630.7px;top:158px;width:3.8px;height:345px;background:linear-gradient(90deg,#7a7a7a,#7a7a7a 25%,#8e8e8e 25%,#8e8e8e 72%,#7c7c7c 72%)"></div>
<svg style="left:92px;top:215px" width="444" height="250" viewBox="92 215 444 250"><defs><linearGradient id="ceil" x1="0" y1="0" x2="0" y2="1"><stop offset="0" stop-color="#666d69"/><stop offset="1" stop-color="#575d59"/></linearGradient><linearGradient id="lw" x1="0" y1="0" x2="1" y2="0"><stop offset="0" stop-color="#959d98"/><stop offset="1" stop-color="#8a928d"/></linearGradient><linearGradient id="rw" x1="1" y1="0" x2="0" y2="0"><stop offset="0" stop-color="#959d98"/><stop offset="1" stop-color="#8a928d"/></linearGradient><linearGradient id="bw" x1="0" y1="0" x2="0" y2="1"><stop offset="0" stop-color="#868e89"/><stop offset="1" stop-color="#939a95"/></linearGradient><radialGradient id="lite" cx="0.5" cy="0.4" r="0.75"><stop offset="0" stop-color="#e2e0da"/><stop offset="1" stop-color="#c3c1ba"/></radialGradient><radialGradient id="bwg" gradientUnits="userSpaceOnUse" cx="318" cy="335" r="110"><stop offset="0" stop-color="#a3a8a3" stop-opacity="0.9"/><stop offset="1" stop-color="#8e9591" stop-opacity="0"/></radialGradient><radialGradient id="flr" gradientUnits="userSpaceOnUse" cx="318" cy="475" r="150" gradientTransform="translate(318 475) scale(0.85 0.9) translate(-318 -475)"><stop offset="0" stop-color="#8e8a86"/><stop offset="0.4" stop-color="#74706d"/><stop offset="1" stop-color="#5d5956"/></radialGradient></defs><rect x="92" y="215" width="444" height="250" fill="#000"/><polygon points="92,215 536,215 536,220.3 438.5,272 189,272 92,220.6" fill="url(#ceil)"/><rect x="189" y="272" width="249.5" height="110" fill="url(#bw)"/><rect x="189" y="272" width="249.5" height="110" fill="url(#bwg)"/><polygon points="92,220.6 189,272 189,374 92,397" fill="url(#lw)"/><polygon points="536,220.3 438.5,272 438.5,374 536,397" fill="url(#rw)"/><circle cx="123.4" cy="246.7" r="0.7" fill="#5f5038"/><circle cx="99.0" cy="314.9" r="0.45" fill="#5f5038"/><circle cx="100.3" cy="294.0" r="0.4" fill="#6a5634"/><circle cx="153.2" cy="323.2" r="0.35" fill="#6a7078"/><circle cx="96.8" cy="259.1" r="0.6" fill="#5d5848"/><circle cx="120.1" cy="245.5" r="0.35" fill="#626870"/><circle cx="146.3" cy="340.7" r="0.35" fill="#735a36"/><circle cx="128.1" cy="317.0" r="0.35" fill="#5f5038"/><circle cx="152.0" cy="307.9" r="0.6" fill="#6a7078"/><circle cx="167.4" cy="302.4" r="0.5" fill="#6d5838"/><circle cx="121.1" cy="360.6" r="0.7" fill="#735a36"/><circle cx="99.9" cy="273.1" r="0.5" fill="#6d5838"/><circle cx="162.8" cy="271.0" r="0.35" fill="#6a5634"/><circle cx="141.7" cy="249.2" r="0.45" fill="#5d5848"/><circle cx="182.5" cy="294.6" r="0.7" fill="#6a5634"/><circle cx="166.2" cy="321.4" r="0.45" fill="#6d5838"/><circle cx="159.4" cy="325.2" r="0.6" fill="#5e6468"/><circle cx="98.7" cy="236.6" r="0.45" fill="#5e6468"/><circle cx="162.9" cy="274.8" r="0.6" fill="#5e6468"/><circle cx="119.6" cy="288.3" r="0.7" fill="#6d5838"/><circle cx="94.2" cy="301.7" r="0.4" fill="#6a5634"/><circle cx="139.9" cy="258.6" r="0.45" fill="#5d5848"/><circle cx="163.6" cy="290.4" r="0.5" fill="#6a5634"/><circle cx="108.1" cy="291.1" r="0.45" fill="#5d5848"/><circle cx="171.5" cy="372.9" r="0.45" fill="#6a7078"/><circle cx="187.7" cy="340.8" r="0.5" fill="#735a36"/><circle cx="106.6" cy="251.2" r="0.4" fill="#735a36"/><circle cx="93.2" cy="367.1" r="0.4" fill="#626870"/><circle cx="119.3" cy="245.8" r="0.6" fill="#6d5838"/><circle cx="151.2" cy="276.4" r="0.4" fill="#5f5038"/><circle cx="136.3" cy="374.2" r="0.7" fill="#6a7078"/><circle cx="130.6" cy="289.8" r="0.5" fill="#6a7078"/><circle cx="98.0" cy="231.9" r="0.4" fill="#5e6468"/><circle cx="107.7" cy="280.2" r="0.35" fill="#6a5634"/><circle cx="92.0" cy="246.8" r="0.35" fill="#6d5838"/><circle cx="112.2" cy="286.6" r="0.7" fill="#626870"/><circle cx="184.7" cy="326.6" r="0.5" fill="#6a5634"/><circle cx="103.2" cy="306.4" r="0.5" fill="#5e6468"/><circle cx="101.9" cy="280.6" r="0.45" fill="#5e6468"/><circle cx="94.2" cy="388.3" r="0.6" fill="#6d5838"/><circle cx="106.2" cy="316.1" r="0.35" fill="#626870"/><circle cx="186.9" cy="372.8" r="0.7" fill="#626870"/><circle cx="142.3" cy="380.8" r="0.45" fill="#735a36"/><circle cx="143.7" cy="357.9" r="0.45" fill="#735a36"/><circle cx="151.5" cy="359.5" r="0.4" fill="#735a36"/><circle cx="171.4" cy="351.0" r="0.4" fill="#735a36"/><circle cx="142.2" cy="282.9" r="0.35" fill="#5f5038"/><circle cx="168.6" cy="303.6" r="0.4" fill="#6d5838"/><circle cx="135.4" cy="385.9" r="0.45" fill="#6d5838"/><circle cx="99.8" cy="238.1" r="0.5" fill="#735a36"/><circle cx="124.8" cy="305.4" r="0.6" fill="#5f5038"/><circle cx="138.5" cy="335.6" r="0.7" fill="#6a5634"/><circle cx="129.7" cy="345.9" r="0.4" fill="#5e6468"/><circle cx="178.2" cy="296.8" r="0.7" fill="#6d5838"/><circle cx="100.4" cy="387.5" r="0.7" fill="#6a7078"/><circle cx="136.9" cy="351.6" r="0.35" fill="#5d5848"/><circle cx="108.5" cy="242.5" r="0.4" fill="#5e6468"/><circle cx="155.8" cy="282.0" r="0.6" fill="#5d5848"/><circle cx="94.1" cy="361.5" r="0.7" fill="#6a5634"/><circle cx="134.1" cy="374.3" r="0.4" fill="#5f5038"/><circle cx="116.4" cy="271.9" r="0.4" fill="#6d5838"/><circle cx="117.2" cy="294.2" r="0.4" fill="#5f5038"/><circle cx="180.3" cy="282.6" r="0.5" fill="#6a7078"/><circle cx="172.2" cy="375.4" r="0.4" fill="#5d5848"/><circle cx="134.7" cy="252.4" r="0.35" fill="#5d5848"/><circle cx="108.7" cy="303.8" r="0.7" fill="#6a5634"/><circle cx="146.0" cy="277.7" r="0.6" fill="#5e6468"/><circle cx="146.3" cy="264.0" r="0.45" fill="#5f5038"/><circle cx="166.9" cy="309.9" r="0.6" fill="#5f5038"/><circle cx="135.0" cy="328.4" r="0.6" fill="#735a36"/><circle cx="159.2" cy="300.1" r="0.6" fill="#5e6468"/><circle cx="141.3" cy="263.8" r="0.6" fill="#626870"/><circle cx="111.7" cy="299.2" r="0.5" fill="#6a5634"/><circle cx="130.1" cy="275.9" r="0.7" fill="#735a36"/><circle cx="133.5" cy="257.6" r="0.45" fill="#6a5634"/><circle cx="161.5" cy="336.9" r="0.4" fill="#626870"/><circle cx="113.3" cy="388.6" r="0.5" fill="#5e6468"/><circle cx="107.8" cy="338.2" r="0.4" fill="#5d5848"/><circle cx="131.2" cy="294.6" r="0.45" fill="#6d5838"/><circle cx="100.9" cy="284.8" r="0.45" fill="#5e6468"/><circle cx="124.2" cy="330.4" r="0.6" fill="#6a5634"/><circle cx="102.9" cy="382.6" r="0.4" fill="#6a5634"/><circle cx="100.2" cy="268.1" r="0.4" fill="#626870"/><circle cx="165.3" cy="365.1" r="0.7" fill="#626870"/><circle cx="131.4" cy="315.0" r="0.6" fill="#5e6468"/><circle cx="97.6" cy="341.8" r="0.5" fill="#6a5634"/><circle cx="100.6" cy="266.1" r="0.6" fill="#735a36"/><circle cx="98.5" cy="372.7" r="0.5" fill="#5f5038"/><circle cx="124.9" cy="317.9" r="0.45" fill="#5d5848"/><circle cx="96.2" cy="345.6" r="0.35" fill="#5d5848"/><circle cx="117.4" cy="252.1" r="0.45" fill="#626870"/><circle cx="143.5" cy="256.4" r="0.5" fill="#5d5848"/><circle cx="118.2" cy="362.3" r="0.45" fill="#5f5038"/><circle cx="93.5" cy="349.8" r="0.6" fill="#735a36"/><circle cx="141.9" cy="263.5" r="0.5" fill="#6a5634"/><circle cx="155.9" cy="335.1" r="0.7" fill="#5e6468"/><circle cx="145.0" cy="377.3" r="0.6" fill="#626870"/><circle cx="125.2" cy="367.3" r="0.7" fill="#5d5848"/><circle cx="131.3" cy="281.5" r="0.35" fill="#5d5848"/><circle cx="93.4" cy="330.7" r="0.45" fill="#6a7078"/><circle cx="107.8" cy="235.0" r="0.5" fill="#626870"/><circle cx="150.1" cy="342.6" r="0.35" fill="#5e6468"/><circle cx="110.0" cy="267.6" r="0.35" fill="#626870"/><circle cx="127.3" cy="278.2" r="0.6" fill="#6d5838"/><circle cx="115.7" cy="390.9" r="0.45" fill="#735a36"/><circle cx="129.0" cy="304.0" r="0.6" fill="#735a36"/><circle cx="116.1" cy="357.4" r="0.35" fill="#626870"/><circle cx="148.9" cy="289.7" r="0.45" fill="#626870"/><circle cx="184.9" cy="371.0" r="0.4" fill="#6a7078"/><circle cx="166.1" cy="347.6" r="0.5" fill="#5d5848"/><circle cx="119.6" cy="329.5" r="0.4" fill="#5f5038"/><circle cx="172.0" cy="346.6" r="0.6" fill="#6a7078"/><circle cx="163.2" cy="363.8" r="0.4" fill="#5f5038"/><circle cx="172.2" cy="323.4" r="0.7" fill="#735a36"/><circle cx="100.3" cy="227.4" r="0.7" fill="#6d5838"/><circle cx="185.1" cy="286.7" r="0.5" fill="#5f5038"/><circle cx="152.9" cy="330.8" r="0.7" fill="#735a36"/><circle cx="169.4" cy="352.4" r="0.6" fill="#6a5634"/><circle cx="163.5" cy="264.6" r="0.35" fill="#626870"/><circle cx="114.8" cy="353.9" r="0.4" fill="#5e6468"/><circle cx="139.9" cy="287.7" r="0.5" fill="#626870"/><circle cx="166.4" cy="329.2" r="0.7" fill="#735a36"/><circle cx="99.5" cy="246.1" r="0.45" fill="#626870"/><circle cx="138.8" cy="306.0" r="0.7" fill="#6a5634"/><circle cx="159.1" cy="339.6" r="0.45" fill="#626870"/><circle cx="137.1" cy="302.5" r="0.35" fill="#735a36"/><circle cx="137.9" cy="271.3" r="0.35" fill="#5e6468"/><circle cx="188.4" cy="288.5" r="0.4" fill="#6a5634"/><circle cx="104.9" cy="365.2" r="0.6" fill="#626870"/><circle cx="178.0" cy="344.5" r="0.4" fill="#5e6468"/><circle cx="179.1" cy="306.0" r="0.35" fill="#5d5848"/><circle cx="92.3" cy="307.0" r="0.5" fill="#6a7078"/><circle cx="121.3" cy="244.9" r="0.45" fill="#6a7078"/><circle cx="122.7" cy="368.7" r="0.35" fill="#6d5838"/><circle cx="164.8" cy="368.5" r="0.35" fill="#735a36"/><circle cx="161.2" cy="379.6" r="0.45" fill="#626870"/><circle cx="128.1" cy="289.5" r="0.6" fill="#6a5634"/><circle cx="127.0" cy="295.8" r="0.45" fill="#5f5038"/><circle cx="156.2" cy="332.4" r="0.4" fill="#735a36"/><circle cx="186.2" cy="297.2" r="0.45" fill="#735a36"/><circle cx="167.0" cy="359.0" r="0.5" fill="#5f5038"/><circle cx="170.8" cy="331.7" r="0.6" fill="#735a36"/><circle cx="163.0" cy="299.8" r="0.4" fill="#626870"/><circle cx="139.1" cy="381.4" r="0.6" fill="#5d5848"/><circle cx="108.6" cy="293.4" r="0.45" fill="#626870"/><circle cx="116.8" cy="350.8" r="0.7" fill="#626870"/><circle cx="131.4" cy="262.2" r="0.5" fill="#6a7078"/><circle cx="103.6" cy="333.8" r="0.35" fill="#735a36"/><circle cx="140.6" cy="363.7" r="0.6" fill="#735a36"/><circle cx="135.9" cy="278.9" r="0.5" fill="#6a7078"/><circle cx="105.5" cy="254.1" r="0.35" fill="#5d5848"/><circle cx="115.2" cy="265.7" r="0.6" fill="#735a36"/><circle cx="178.1" cy="352.7" r="0.5" fill="#6a7078"/><circle cx="132.1" cy="312.8" r="0.5" fill="#626870"/><circle cx="104.2" cy="309.1" r="0.7" fill="#735a36"/><circle cx="101.0" cy="378.7" r="0.5" fill="#6a7078"/><circle cx="154.6" cy="296.4" r="0.45" fill="#5f5038"/><circle cx="104.3" cy="295.3" r="0.5" fill="#5e6468"/><circle cx="92.0" cy="289.3" r="0.6" fill="#5e6468"/><circle cx="102.6" cy="247.3" r="0.6" fill="#6a5634"/><circle cx="183.3" cy="347.7" r="0.7" fill="#5e6468"/><circle cx="100.2" cy="357.5" r="0.35" fill="#5d5848"/><circle cx="114.6" cy="382.8" r="0.7" fill="#626870"/><circle cx="185.4" cy="330.9" r="0.6" fill="#6a7078"/><circle cx="98.8" cy="312.8" r="0.6" fill="#735a36"/><circle cx="129.6" cy="259.6" r="0.6" fill="#5f5038"/><circle cx="93.0" cy="273.4" r="0.5" fill="#626870"/><circle cx="185.0" cy="334.1" r="0.4" fill="#5e6468"/><circle cx="143.0" cy="316.8" r="0.35" fill="#6a7078"/><circle cx="160.4" cy="274.4" r="0.35" fill="#735a36"/><circle cx="140.3" cy="339.4" r="0.5" fill="#6a5634"/><circle cx="117.0" cy="338.1" r="0.45" fill="#735a36"/><circle cx="139.8" cy="343.2" r="0.7" fill="#6a7078"/><circle cx="127.1" cy="290.2" r="0.35" fill="#626870"/><circle cx="163.7" cy="309.4" r="0.4" fill="#5e6468"/><circle cx="186.1" cy="275.2" r="0.4" fill="#735a36"/><circle cx="137.1" cy="266.9" r="0.45" fill="#6a5634"/><circle cx="184.3" cy="307.8" r="0.4" fill="#735a36"/><circle cx="139.1" cy="381.1" r="0.35" fill="#5d5848"/><circle cx="94.3" cy="325.5" r="0.5" fill="#5f5038"/><circle cx="135.6" cy="346.0" r="0.45" fill="#6a5634"/><circle cx="123.9" cy="252.8" r="0.6" fill="#5e6468"/><circle cx="95.1" cy="337.6" r="0.5" fill="#6d5838"/><circle cx="187.5" cy="298.3" r="0.35" fill="#5f5038"/><circle cx="99.6" cy="234.3" r="0.5" fill="#6a5634"/><circle cx="146.4" cy="354.3" r="0.5" fill="#6d5838"/><circle cx="166.6" cy="274.6" r="0.5" fill="#6a5634"/><circle cx="96.8" cy="303.8" r="0.45" fill="#5e6468"/><circle cx="110.7" cy="284.5" r="0.5" fill="#5f5038"/><circle cx="499.9" cy="263.9" r="0.7" fill="#6a7078"/><circle cx="463.2" cy="352.3" r="0.6" fill="#6d5838"/><circle cx="473.6" cy="279.3" r="0.6" fill="#5f5038"/><circle cx="463.7" cy="346.8" r="0.45" fill="#626870"/><circle cx="467.1" cy="347.7" r="0.6" fill="#6a5634"/><circle cx="531.5" cy="288.4" r="0.45" fill="#6a7078"/><circle cx="517.9" cy="243.5" r="0.5" fill="#5d5848"/><circle cx="467.7" cy="342.5" r="0.4" fill="#735a36"/><circle cx="470.1" cy="276.6" r="0.45" fill="#6a5634"/><circle cx="488.2" cy="289.3" r="0.4" fill="#735a36"/><circle cx="478.0" cy="335.0" r="0.5" fill="#6d5838"/><circle cx="453.7" cy="295.5" r="0.35" fill="#6a5634"/><circle cx="447.4" cy="308.2" r="0.7" fill="#5e6468"/><circle cx="483.2" cy="377.8" r="0.4" fill="#6a5634"/><circle cx="514.4" cy="272.0" r="0.45" fill="#626870"/><circle cx="474.6" cy="350.6" r="0.4" fill="#5e6468"/><circle cx="462.2" cy="263.4" r="0.4" fill="#626870"/><circle cx="524.6" cy="322.4" r="0.45" fill="#6a5634"/><circle cx="487.7" cy="261.0" r="0.35" fill="#5e6468"/><circle cx="535.1" cy="238.1" r="0.5" fill="#735a36"/><circle cx="520.4" cy="381.8" r="0.35" fill="#626870"/><circle cx="496.8" cy="366.5" r="0.4" fill="#6a5634"/><circle cx="474.5" cy="373.3" r="0.5" fill="#626870"/><circle cx="513.9" cy="337.7" r="0.35" fill="#6a5634"/><circle cx="500.5" cy="345.6" r="0.45" fill="#735a36"/><circle cx="441.7" cy="280.2" r="0.35" fill="#735a36"/><circle cx="536.0" cy="226.8" r="0.7" fill="#735a36"/><circle cx="517.8" cy="364.9" r="0.5" fill="#6d5838"/><circle cx="456.1" cy="275.3" r="0.4" fill="#5f5038"/><circle cx="515.9" cy="317.0" r="0.35" fill="#6a7078"/><circle cx="447.9" cy="290.0" r="0.6" fill="#5d5848"/><circle cx="454.0" cy="343.1" r="0.5" fill="#626870"/><circle cx="503.4" cy="294.0" r="0.35" fill="#626870"/><circle cx="511.0" cy="376.4" r="0.5" fill="#6a7078"/><circle cx="439.8" cy="355.7" r="0.45" fill="#735a36"/><circle cx="476.3" cy="291.7" r="0.35" fill="#6a7078"/><circle cx="526.4" cy="295.0" r="0.35" fill="#6a7078"/><circle cx="494.6" cy="284.6" r="0.4" fill="#5d5848"/><circle cx="439.5" cy="317.6" r="0.7" fill="#6a7078"/><circle cx="446.7" cy="330.1" r="0.45" fill="#5d5848"/><circle cx="452.3" cy="270.1" r="0.6" fill="#5d5848"/><circle cx="528.7" cy="239.3" r="0.5" fill="#735a36"/><circle cx="467.6" cy="368.2" r="0.35" fill="#5e6468"/><circle cx="468.8" cy="327.6" r="0.7" fill="#6a7078"/><circle cx="446.5" cy="346.1" r="0.7" fill="#5d5848"/><circle cx="500.8" cy="371.6" r="0.6" fill="#6a7078"/><circle cx="498.2" cy="254.7" r="0.5" fill="#5d5848"/><circle cx="530.0" cy="247.7" r="0.45" fill="#6a5634"/><circle cx="517.9" cy="254.1" r="0.6" fill="#5f5038"/><circle cx="503.5" cy="277.4" r="0.5" fill="#5e6468"/><circle cx="491.9" cy="331.0" r="0.45" fill="#6a7078"/><circle cx="468.2" cy="264.1" r="0.5" fill="#6d5838"/><circle cx="481.8" cy="297.6" r="0.35" fill="#5f5038"/><circle cx="498.7" cy="306.6" r="0.4" fill="#5e6468"/><circle cx="512.8" cy="358.1" r="0.5" fill="#5d5848"/><circle cx="517.4" cy="290.9" r="0.35" fill="#5d5848"/><circle cx="473.1" cy="284.7" r="0.5" fill="#5f5038"/><circle cx="528.4" cy="275.5" r="0.7" fill="#6a5634"/><circle cx="443.3" cy="309.2" r="0.5" fill="#5d5848"/><circle cx="498.2" cy="342.6" r="0.35" fill="#735a36"/><circle cx="450.9" cy="376.8" r="0.45" fill="#5d5848"/><circle cx="505.2" cy="347.6" r="0.4" fill="#6a5634"/><circle cx="519.6" cy="328.0" r="0.45" fill="#5d5848"/><circle cx="469.7" cy="328.6" r="0.5" fill="#5d5848"/><circle cx="485.1" cy="324.8" r="0.6" fill="#735a36"/><circle cx="529.8" cy="340.3" r="0.5" fill="#5d5848"/><circle cx="515.6" cy="266.8" r="0.6" fill="#5f5038"/><circle cx="500.4" cy="283.7" r="0.5" fill="#6a5634"/><circle cx="462.7" cy="314.8" r="0.5" fill="#6d5838"/><circle cx="494.6" cy="283.8" r="0.35" fill="#5e6468"/><circle cx="460.5" cy="328.9" r="0.35" fill="#626870"/><circle cx="518.3" cy="264.9" r="0.7" fill="#6d5838"/><circle cx="509.8" cy="352.2" r="0.4" fill="#5d5848"/><circle cx="466.5" cy="330.7" r="0.5" fill="#6d5838"/><circle cx="525.8" cy="243.4" r="0.4" fill="#5f5038"/><circle cx="473.0" cy="259.7" r="0.6" fill="#626870"/><circle cx="495.7" cy="256.1" r="0.6" fill="#5e6468"/><circle cx="516.5" cy="345.2" r="0.5" fill="#6a5634"/><circle cx="503.2" cy="267.7" r="0.45" fill="#5f5038"/><circle cx="443.5" cy="365.3" r="0.45" fill="#5e6468"/><circle cx="497.0" cy="311.6" r="0.5" fill="#735a36"/><circle cx="527.4" cy="238.6" r="0.6" fill="#735a36"/><circle cx="497.6" cy="309.7" r="0.7" fill="#6a7078"/><circle cx="517.7" cy="250.9" r="0.45" fill="#6a5634"/><circle cx="525.2" cy="358.6" r="0.7" fill="#5f5038"/><circle cx="474.8" cy="297.3" r="0.5" fill="#6a5634"/><circle cx="510.7" cy="300.1" r="0.4" fill="#6a5634"/><circle cx="463.6" cy="334.0" r="0.35" fill="#6d5838"/><circle cx="525.3" cy="383.8" r="0.45" fill="#5f5038"/><circle cx="464.1" cy="318.0" r="0.5" fill="#626870"/><circle cx="525.6" cy="235.1" r="0.6" fill="#5f5038"/><circle cx="520.5" cy="255.9" r="0.4" fill="#6d5838"/><circle cx="456.8" cy="288.8" r="0.6" fill="#735a36"/><circle cx="475.2" cy="370.8" r="0.7" fill="#5e6468"/><circle cx="484.3" cy="313.9" r="0.35" fill="#5f5038"/><circle cx="480.8" cy="348.3" r="0.6" fill="#626870"/><circle cx="515.3" cy="289.3" r="0.6" fill="#6a5634"/><circle cx="493.4" cy="250.4" r="0.35" fill="#5f5038"/><circle cx="449.0" cy="330.1" r="0.4" fill="#6d5838"/><circle cx="533.8" cy="344.0" r="0.35" fill="#5f5038"/><circle cx="451.6" cy="333.9" r="0.35" fill="#6a5634"/><circle cx="495.9" cy="284.3" r="0.6" fill="#6a5634"/><circle cx="524.2" cy="353.8" r="0.7" fill="#6a7078"/><circle cx="521.1" cy="363.7" r="0.7" fill="#6a5634"/><circle cx="518.9" cy="331.8" r="0.45" fill="#5e6468"/><circle cx="512.2" cy="256.3" r="0.45" fill="#6d5838"/><circle cx="463.2" cy="270.0" r="0.7" fill="#6d5838"/><circle cx="527.2" cy="356.2" r="0.6" fill="#5e6468"/><circle cx="521.4" cy="329.4" r="0.35" fill="#6a7078"/><circle cx="441.1" cy="311.8" r="0.35" fill="#6d5838"/><circle cx="493.5" cy="346.4" r="0.35" fill="#626870"/><circle cx="457.8" cy="354.9" r="0.35" fill="#5f5038"/><circle cx="506.1" cy="366.1" r="0.5" fill="#6d5838"/><circle cx="531.8" cy="311.2" r="0.6" fill="#5d5848"/><circle cx="465.8" cy="258.0" r="0.7" fill="#735a36"/><circle cx="515.2" cy="343.4" r="0.35" fill="#6d5838"/><circle cx="472.9" cy="291.0" r="0.5" fill="#6a5634"/><circle cx="479.4" cy="334.3" r="0.45" fill="#735a36"/><circle cx="467.7" cy="295.8" r="0.6" fill="#5d5848"/><circle cx="475.2" cy="376.5" r="0.4" fill="#5e6468"/><circle cx="450.4" cy="325.2" r="0.7" fill="#5f5038"/><circle cx="472.2" cy="277.8" r="0.4" fill="#5e6468"/><circle cx="502.9" cy="351.3" r="0.4" fill="#5e6468"/><circle cx="481.0" cy="356.9" r="0.6" fill="#735a36"/><circle cx="450.4" cy="301.8" r="0.7" fill="#735a36"/><circle cx="487.8" cy="267.3" r="0.7" fill="#5d5848"/><circle cx="508.9" cy="326.7" r="0.45" fill="#5d5848"/><circle cx="535.5" cy="249.1" r="0.7" fill="#6a5634"/><circle cx="452.5" cy="273.5" r="0.45" fill="#6a7078"/><circle cx="527.3" cy="269.7" r="0.5" fill="#5e6468"/><circle cx="441.3" cy="290.6" r="0.5" fill="#735a36"/><circle cx="487.0" cy="331.9" r="0.5" fill="#5f5038"/><circle cx="451.9" cy="326.9" r="0.5" fill="#5f5038"/><circle cx="510.6" cy="380.7" r="0.5" fill="#6a7078"/><circle cx="520.9" cy="338.2" r="0.7" fill="#735a36"/><circle cx="504.6" cy="333.6" r="0.5" fill="#6a7078"/><circle cx="468.7" cy="331.2" r="0.35" fill="#6a7078"/><circle cx="461.8" cy="290.8" r="0.7" fill="#5d5848"/><circle cx="462.5" cy="295.0" r="0.5" fill="#5f5038"/><circle cx="498.9" cy="292.5" r="0.7" fill="#5d5848"/><circle cx="525.7" cy="278.1" r="0.35" fill="#6a7078"/><circle cx="519.5" cy="380.7" r="0.35" fill="#5f5038"/><circle cx="508.2" cy="388.4" r="0.4" fill="#6d5838"/><circle cx="447.9" cy="321.7" r="0.6" fill="#735a36"/><circle cx="508.3" cy="310.7" r="0.7" fill="#6d5838"/><circle cx="489.1" cy="292.6" r="0.5" fill="#735a36"/><circle cx="535.0" cy="252.5" r="0.6" fill="#6a5634"/><circle cx="509.5" cy="328.7" r="0.7" fill="#5f5038"/><circle cx="462.7" cy="287.6" r="0.35" fill="#5f5038"/><circle cx="499.6" cy="339.5" r="0.6" fill="#626870"/><circle cx="448.7" cy="273.7" r="0.5" fill="#735a36"/><circle cx="535.4" cy="390.1" r="0.5" fill="#735a36"/><circle cx="444.8" cy="361.3" r="0.4" fill="#5e6468"/><circle cx="500.9" cy="347.6" r="0.4" fill="#6d5838"/><circle cx="503.3" cy="367.0" r="0.5" fill="#5e6468"/><circle cx="535.6" cy="354.5" r="0.7" fill="#5d5848"/><circle cx="514.4" cy="303.1" r="0.4" fill="#626870"/><circle cx="507.0" cy="341.7" r="0.5" fill="#5d5848"/><circle cx="485.2" cy="362.6" r="0.45" fill="#6d5838"/><circle cx="462.0" cy="273.4" r="0.5" fill="#5e6468"/><circle cx="480.0" cy="332.8" r="0.7" fill="#6d5838"/><circle cx="453.0" cy="273.7" r="0.5" fill="#5f5038"/><circle cx="446.4" cy="319.9" r="0.45" fill="#5d5848"/><circle cx="490.0" cy="281.1" r="0.6" fill="#5f5038"/><circle cx="502.4" cy="257.1" r="0.35" fill="#626870"/><circle cx="514.1" cy="281.3" r="0.4" fill="#735a36"/><circle cx="526.6" cy="360.1" r="0.4" fill="#6a5634"/><circle cx="503.5" cy="378.2" r="0.7" fill="#626870"/><circle cx="457.3" cy="342.6" r="0.6" fill="#6a5634"/><circle cx="510.7" cy="297.6" r="0.35" fill="#6a5634"/><circle cx="463.9" cy="261.4" r="0.4" fill="#5e6468"/><circle cx="486.2" cy="308.2" r="0.6" fill="#5f5038"/><circle cx="453.7" cy="276.8" r="0.7" fill="#5e6468"/><circle cx="503.2" cy="368.8" r="0.45" fill="#6a7078"/><circle cx="445.4" cy="332.8" r="0.7" fill="#5f5038"/><circle cx="517.2" cy="236.6" r="0.5" fill="#5e6468"/><circle cx="377.5" cy="282.3" r="0.4" fill="#6a7078"/><circle cx="403.6" cy="298.0" r="0.5" fill="#735a36"/><circle cx="259.8" cy="296.3" r="0.45" fill="#5f5038"/><circle cx="394.9" cy="292.8" r="0.5" fill="#6a7078"/><circle cx="272.1" cy="341.9" r="0.6" fill="#6d5838"/><circle cx="431.8" cy="318.5" r="0.35" fill="#6d5838"/><circle cx="236.9" cy="322.6" r="0.4" fill="#6a5634"/><circle cx="384.3" cy="274.8" r="0.7" fill="#6a7078"/><circle cx="324.8" cy="275.5" r="0.45" fill="#6a5634"/><circle cx="190.5" cy="285.5" r="0.5" fill="#5f5038"/><circle cx="385.5" cy="336.6" r="0.6" fill="#6a7078"/><circle cx="362.4" cy="314.3" r="0.7" fill="#6a5634"/><circle cx="241.9" cy="319.4" r="0.5" fill="#5d5848"/><circle cx="214.2" cy="284.9" r="0.35" fill="#6a7078"/><circle cx="381.9" cy="336.9" r="0.7" fill="#5f5038"/><circle cx="280.8" cy="330.4" r="0.45" fill="#626870"/><circle cx="403.8" cy="285.1" r="0.35" fill="#6d5838"/><circle cx="194.1" cy="312.2" r="0.6" fill="#5f5038"/><circle cx="394.4" cy="326.9" r="0.5" fill="#6a7078"/><circle cx="300.2" cy="273.0" r="0.5" fill="#5d5848"/><circle cx="214.4" cy="317.8" r="0.4" fill="#5d5848"/><circle cx="191.3" cy="319.5" r="0.35" fill="#735a36"/><circle cx="405.5" cy="281.2" r="0.35" fill="#626870"/><circle cx="368.1" cy="289.2" r="0.7" fill="#5d5848"/><circle cx="418.8" cy="298.0" r="0.7" fill="#5d5848"/><circle cx="370.7" cy="278.0" r="0.7" fill="#5e6468"/><circle cx="252.3" cy="340.5" r="0.7" fill="#5f5038"/><circle cx="191.8" cy="273.0" r="0.7" fill="#6a5634"/><circle cx="285.8" cy="294.2" r="0.6" fill="#5d5848"/><circle cx="427.5" cy="331.3" r="0.6" fill="#5f5038"/><circle cx="267.8" cy="339.4" r="0.7" fill="#5e6468"/><circle cx="306.0" cy="283.8" r="0.35" fill="#6d5838"/><circle cx="426.5" cy="283.6" r="0.5" fill="#5e6468"/><circle cx="285.0" cy="327.8" r="0.45" fill="#6d5838"/><circle cx="261.8" cy="276.3" r="0.7" fill="#6d5838"/><circle cx="405.5" cy="323.5" r="0.35" fill="#5d5848"/><circle cx="282.8" cy="320.6" r="0.6" fill="#735a36"/><circle cx="390.1" cy="292.1" r="0.35" fill="#6d5838"/><circle cx="254.5" cy="302.0" r="0.6" fill="#5f5038"/><circle cx="260.8" cy="282.0" r="0.6" fill="#5d5848"/><circle cx="257.2" cy="332.4" r="0.6" fill="#5e6468"/><circle cx="275.4" cy="278.0" r="0.6" fill="#5e6468"/><circle cx="387.5" cy="286.2" r="0.7" fill="#735a36"/><circle cx="266.1" cy="276.1" r="0.5" fill="#5e6468"/><circle cx="365.4" cy="337.7" r="0.6" fill="#5f5038"/><circle cx="386.1" cy="304.6" r="0.35" fill="#6d5838"/><circle cx="381.3" cy="288.5" r="0.6" fill="#626870"/><circle cx="409.4" cy="309.1" r="0.5" fill="#735a36"/><circle cx="236.1" cy="285.7" r="0.4" fill="#626870"/><circle cx="279.3" cy="312.1" r="0.5" fill="#5d5848"/><circle cx="250.3" cy="337.5" r="0.5" fill="#6d5838"/><circle cx="404.7" cy="298.4" r="0.5" fill="#6a5634"/><circle cx="227.9" cy="314.4" r="0.45" fill="#626870"/><circle cx="318.3" cy="273.5" r="0.35" fill="#735a36"/><circle cx="435.6" cy="333.5" r="0.5" fill="#735a36"/><circle cx="254.1" cy="327.3" r="0.5" fill="#6a5634"/><circle cx="424.7" cy="326.5" r="0.6" fill="#5d5848"/><circle cx="252.2" cy="274.7" r="0.4" fill="#5d5848"/><circle cx="283.2" cy="274.0" r="0.35" fill="#6d5838"/><circle cx="405.8" cy="304.5" r="0.35" fill="#6a7078"/><circle cx="418.6" cy="322.2" r="0.35" fill="#626870"/><circle cx="268.4" cy="288.6" r="0.35" fill="#6a7078"/><circle cx="234.5" cy="332.3" r="0.45" fill="#735a36"/><circle cx="435.9" cy="287.7" r="0.35" fill="#626870"/><circle cx="423.4" cy="276.2" r="0.6" fill="#5f5038"/><circle cx="397.5" cy="275.3" r="0.6" fill="#5e6468"/><circle cx="202.9" cy="282.3" r="0.35" fill="#735a36"/><circle cx="357.5" cy="293.2" r="0.6" fill="#5e6468"/><circle cx="377.7" cy="279.5" r="0.45" fill="#6d5838"/><circle cx="253.0" cy="280.8" r="0.5" fill="#6a7078"/><circle cx="231.0" cy="288.9" r="0.4" fill="#5f5038"/><circle cx="387.9" cy="283.1" r="0.4" fill="#6a5634"/><circle cx="421.6" cy="333.5" r="0.7" fill="#5d5848"/><circle cx="382.8" cy="340.0" r="0.5" fill="#5f5038"/><circle cx="273.6" cy="330.4" r="0.5" fill="#6a5634"/><circle cx="345.4" cy="282.1" r="0.4" fill="#5f5038"/><circle cx="233.9" cy="304.0" r="0.4" fill="#5e6468"/><circle cx="405.8" cy="290.9" r="0.5" fill="#735a36"/><circle cx="227.8" cy="291.2" r="0.45" fill="#6d5838"/><circle cx="389.2" cy="290.5" r="0.35" fill="#6d5838"/><circle cx="227.2" cy="308.5" r="0.7" fill="#735a36"/><circle cx="218.7" cy="325.6" r="0.45" fill="#6a7078"/><circle cx="435.8" cy="342.9" r="0.4" fill="#6a5634"/><circle cx="286.1" cy="301.5" r="0.4" fill="#5f5038"/><circle cx="396.2" cy="341.5" r="0.4" fill="#5f5038"/><circle cx="385.6" cy="339.0" r="0.45" fill="#5d5848"/><circle cx="278.7" cy="274.9" r="0.5" fill="#735a36"/><circle cx="257.9" cy="284.8" r="0.4" fill="#735a36"/><circle cx="366.2" cy="286.0" r="0.35" fill="#6a5634"/><circle cx="410.4" cy="323.9" r="0.45" fill="#5d5848"/><circle cx="240.3" cy="315.5" r="0.7" fill="#735a36"/><circle cx="334.2" cy="286.4" r="0.35" fill="#6a7078"/><circle cx="398.4" cy="337.1" r="0.6" fill="#6d5838"/><circle cx="272.5" cy="331.8" r="0.5" fill="#6a5634"/><circle cx="192.8" cy="336.6" r="0.5" fill="#5d5848"/><circle cx="406.1" cy="290.9" r="0.4" fill="#6d5838"/><rect x="287.8" y="290.3" width="61.2" height="52.5" fill="url(#lite)"/><polygon points="220,343 409,343 536,424.7 536,465 92,465 92,424.7" fill="url(#flr)"/><g stroke="#1fb6b6" stroke-width="1.3" fill="none"><polyline points="92,220.6 189,272 438.5,272 536,220.3"/><path d="M189,272 V363 M438.5,272 V363 M92,397 L164,379 M464.5,379 L536,397"/></g><g transform="translate(173.75,426.4) rotate(-35.4)"><g transform="rotate(35.4) translate(1.2,2.6) rotate(-35.4)"><ellipse cx="0" cy="0" rx="42.9" ry="16.9" fill="#5a0f2a"/></g><ellipse cx="0" cy="0" rx="42.9" ry="16.9" fill="#b3214f"/></g><polyline points="172.8,409.3 166.3,435.2 208.5,411" fill="none" stroke="#1a1a1a" stroke-width="4" stroke-linejoin="miter"/><g transform="translate(182,384.3) rotate(-25)"><g transform="rotate(25) translate(0.9,2.2) rotate(-25)"><ellipse cx="0" cy="0" rx="27.35" ry="7.9" fill="#5a0f2a"/></g><ellipse cx="0" cy="0" rx="27.35" ry="7.9" fill="#b3214f"/></g><polyline points="204.7,371.6 178.3,382.3 172.9,396.3" fill="none" stroke="#1a1a1a" stroke-width="2.8"/><g transform="translate(237.5,360.6) rotate(-17)"><g transform="rotate(17) translate(0.8,1.8) rotate(-17)"><ellipse cx="0" cy="0" rx="15.8" ry="7.6" fill="#5a0f2a"/></g><ellipse cx="0" cy="0" rx="15.8" ry="7.6" fill="#b3214f"/></g><polyline points="222.9,363.6 242.4,356.9 245.6,364.3" fill="none" stroke="#1a1a1a" stroke-width="2.2"/><g transform="translate(248.3,384.8) rotate(-33.7)"><g transform="rotate(33.7) translate(0.9,2.2) rotate(-33.7)"><ellipse cx="0" cy="0" rx="21.3" ry="10.3" fill="#5a0f2a"/></g><ellipse cx="0" cy="0" rx="21.3" ry="10.3" fill="#b3214f"/></g><polyline points="250,371.6 256,381.5 231.5,394.8" fill="none" stroke="#1a1a1a" stroke-width="2.8"/><g transform="translate(306.5,381.7) rotate(0)"><g transform="rotate(0) translate(0,3) rotate(0)"><ellipse cx="0" cy="0" rx="14.7" ry="3.8" fill="#5a0f2a"/></g><ellipse cx="0" cy="0" rx="14.7" ry="3.8" fill="#b3214f"/><text x="0" y="1.8" font-size="6" font-weight="bold" text-anchor="middle" fill="#6e1230" font-family="Liberation Sans" letter-spacing="0.1" textLength="24" lengthAdjust="spacingAndGlyphs">START</text></g><g transform="translate(355.3,381.7) rotate(0)"><g transform="rotate(0) translate(0,3) rotate(0)"><ellipse cx="0" cy="0" rx="14.6" ry="3.8" fill="#5a0f2a"/></g><ellipse cx="0" cy="0" rx="14.6" ry="3.8" fill="#b3214f"/><text x="0" y="1.8" font-size="6" font-weight="bold" text-anchor="middle" fill="#6e1230" font-family="Liberation Sans" letter-spacing="0" textLength="25" lengthAdjust="spacingAndGlyphs">SELECT</text></g><g transform="translate(445.7,384.7) rotate(23.8)"><g transform="rotate(-23.8) translate(-1.8,2.1) rotate(23.8)"><ellipse cx="0" cy="0" rx="27" ry="9.8" fill="#5a0f2a"/></g><ellipse cx="0" cy="0" rx="27" ry="9.8" fill="#b3214f"/></g><g transform="translate(454,427) rotate(34.6)"><g transform="rotate(-34.6) translate(-2,2.3) rotate(34.6)"><ellipse cx="0" cy="0" rx="42.2" ry="18.3" fill="#5a0f2a"/></g><ellipse cx="0" cy="0" rx="42.2" ry="18.3" fill="#b3214f"/></g><g transform="translate(443.3 382) rotate(32)" stroke="#2a0a14" stroke-width="0.9" fill="none"><path d="M-10.3,0 L-5,-1.7 L5,-1.7 L10.3,0 L5,1.7 L-5,1.7Z M0,-1.7 L0,1.7"/></g><g stroke="#151515" stroke-width="0.85" fill="none"><path d="M439.5,411.5 L456.7,433.1 M439.5,411.5 L465,433.1 M441.5,412.5 L451.5,423.5"/><path d="M448.3,423.2 L454.8,424.8" stroke-width="1.6"/></g></svg>
<div class="a" style="left:634.5px;top:40px;width:165.5px;height:462.5px;background:#9d9d9d"></div>
<div class="a" style="left:634.5px;top:40px;width:165.5px;height:8.7px;background:#9b9b9b"></div>
<div class="a" style="left:634.7px;top:40.6px;width:46.3px;height:8.3px;background:#b6b6b6;border:0.8px solid #8c8c8c;border-bottom:none;border-radius:2px 2px 0 0"></div>
<svg style="left:638px;top:42.3px" width="5" height="5" viewBox="0 0 10 10"><circle cx="5" cy="5" r="4.6" fill="#222"/><rect x="4.2" y="4" width="1.6" height="4" fill="#eee"/><rect x="4.2" y="2" width="1.6" height="1.3" fill="#eee"/></svg>
<div class="t" style="left:645px;top:42.51px;font-size:6.37px;letter-spacing:0.26px;color:#222">Inspector</div>
<svg style="left:785px;top:42.6px" width="4" height="5" viewBox="0 0 8 10"><path d="M2,5 V3 A2,2 0 0 1 6,3 V5" fill="none" stroke="#333" stroke-width="1.3"/><rect x="1" y="5" width="6" height="5" fill="#333"/></svg>
<svg style="left:791px;top:44px" width="8" height="3" viewBox="0 0 16 6"><path d="M0,1 L4,1 L2,4Z" fill="#444"/><path d="M7,1 H16 M7,3 H16 M7,5 H16" stroke="#666" stroke-width="1"/></svg>
<div class="a" style="left:634.5px;top:48.7px;width:165.5px;height:25.5px;background:#a8a8a8;border-bottom:0.8px solid #7e7e7e"></div>
<svg style="left:637px;top:53.5px" width="12" height="11" viewBox="0 0 24 22"><path d="M2,5 L13,1.5 L22,4.5 L11,8Z" fill="#e2e2e2"/><path d="M2,5 L11,8 L11,19 L2,15.5Z" fill="#cdcdcd"/><path d="M22,4.5 L11,8 L11,19 L22,15Z" fill="#b4b4b4"/><path d="M2,5 L13,1.5 L22,4.5 L22,15 L11,19 L2,15.5Z" fill="none" stroke="#8e8e8e" stroke-width="0.8"/><path d="M1.5,16 L8,16 L4.8,20.5Z" fill="#222"/></svg>
<div class="a" style="left:656.6px;top:54px;width:6.8px;height:6.4px;border:0.8px solid #6a6a6a;border-radius:1px;background:linear-gradient(#d6dde6,#b9c4d2)"></div>
<svg style="left:657.2px;top:53.2px" width="6.6" height="6.6" viewBox="0 0 12 12"><path d="M2,6.2 L5,9.6 L11,1.5" stroke="#13254a" stroke-width="2.3" fill="none"/></svg>
<div class="a" style="left:666px;top:53px;width:93px;height:8px;border:0.8px solid #808080;border-top-color:#666;background:#bebebe"></div>
<div class="t" style="left:668px;top:54.19px;font-size:6.27px;letter-spacing:0.26px;color:#111">RightEyeAnchor</div>
<div class="a" style="left:763px;top:53.5px;width:5.5px;height:6px;border:0.8px solid #7a7a7a;border-radius:1px;background:#c8c8c8"></div>
<div class="t" style="left:771px;top:54.29px;font-size:6.27px;letter-spacing:0.26px;color:#111">Static</div>
<svg style="left:792px;top:55.6px" width="4" height="2.5" viewBox="0 0 8 5"><path d="M0,0 L8,0 L4,5Z" fill="#222"/></svg>
<div class="t" style="left:653.5px;top:64.59px;font-size:6.27px;letter-spacing:0.26px;color:#111">Tag</div>
<div class="a" style="left:666.6px;top:63.6px;width:55.9px;height:8px;border:0.8px solid #808080;border-radius:1.5px;background:linear-gradient(#c8c8c8,#b8b8b8)"></div>
<div class="t" style="left:669px;top:65.79px;font-size:5.80px;color:#333;-webkit-text-stroke:0.1px #333;letter-spacing:0.3px">Untagged</div>
<svg style="left:718px;top:65.8px" width="2.6" height="4.4" viewBox="0 0 4 8"><path d="M0,3.2 L2,0.4 L4,3.2Z M0,4.8 L2,7.6 L4,4.8Z" fill="#333"/></svg>
<div class="t" style="left:727px;top:64.59px;font-size:6.27px;letter-spacing:0.26px;color:#111">Layer</div>
<div class="a" style="left:746.6px;top:63.6px;width:50px;height:8px;border:0.8px solid #808080;border-radius:1.5px;background:linear-gradient(#c8c8c8,#b8b8b8)"></div>
<div class="t" style="left:749px;top:65.79px;font-size:5.80px;color:#333;-webkit-text-stroke:0.1px #333;letter-spacing:0.3px">Default</div>
<svg style="left:792.5px;top:65.8px" width="2.6" height="4.4" viewBox="0 0 4 8"><path d="M0,3.2 L2,0.4 L4,3.2Z M0,4.8 L2,7.6 L4,4.8Z" fill="#333"/></svg>
<div class="a" style="left:634.5px;top:74.2px;width:165.5px;height:0.8px;background:#7e7e7e"></div>
<svg style="left:637.6px;top:77.8px" width="4" height="3.5" viewBox="0 0 8 7"><path d="M0,0 L8,0 L4,7Z" fill="#555"/></svg>
<svg style="left:644.5px;top:75.5px" width="7" height="7" viewBox="0 0 14 14"><path d="M7,7 V1" stroke="#3a9a3a" stroke-width="1.6"/><path d="M7,7 L1.5,12" stroke="#d03030" stroke-width="1.6"/><path d="M7,7 L12.5,12" stroke="#3060d0" stroke-width="1.6"/></svg>
<div class="t" style="left:660px;top:76.69px;font-size:6.74px;letter-spacing:0.26px;font-weight:bold;color:#111">Transform</div>
<svg style="left:772px;top:75.8px" width="6.5" height="7.5" viewBox="0 0 13 15"><path d="M1,2.5 L8.5,0.5 L12,2 L12,13 L4.5,14.5 L1,13Z" fill="#6f9bd6"/><path d="M4.5,3.8 L12,2 L12,13 L4.5,14.5Z" fill="#4a78b8"/><path d="M1,2.5 L4.5,3.8 L4.5,14.5" stroke="#2c4a78" stroke-width="0.8" fill="none"/><path d="M6,6 L10.5,5" stroke="#cde" stroke-width="0.8"/></svg>
<svg style="left:781.5px;top:76.6px" width="6" height="6" viewBox="0 0 12 12"><path d="M1,3 H11 M1,8 H11" stroke="#333" stroke-width="1.5"/><rect x="6" y="1" width="2.4" height="4" fill="#333"/><rect x="2.5" y="6" width="2.4" height="4" fill="#333"/></svg>
<svg style="left:791px;top:76.39999999999999px" width="7" height="6.5" viewBox="0 0 14 13"><circle cx="6" cy="6" r="3.6" fill="none" stroke="#222" stroke-width="2.4" stroke-dasharray="1.6,1"/><circle cx="6" cy="6" r="1.2" fill="#222"/><path d="M10,11 L12,9 L14,11Z" fill="#222"/></svg>
<div class="t" style="left:641.7px;top:85.19px;font-size:6.27px;letter-spacing:0.26px;color:#222">Position</div>
<div class="t" style="left:695.4px;top:85.19px;font-size:6.27px;letter-spacing:0.26px;color:#111">X</div>
<div class="a" style="left:701.2px;top:83.65px;width:26.09999999999991px;height:8.7px;border:0.8px solid #8e8e8e;border-top:1.3px solid #777;background:#b6b6b6"></div>
<div class="t" style="left:702.8000000000001px;top:85.19px;font-size:6.27px;letter-spacing:0.26px;color:#111">0</div>
<div class="t" style="left:729.9px;top:85.19px;font-size:6.27px;letter-spacing:0.26px;color:#111">Y</div>
<div class="a" style="left:736.2px;top:83.65px;width:26.199999999999932px;height:8.7px;border:0.8px solid #8e8e8e;border-top:1.3px solid #777;background:#b6b6b6"></div>
<div class="t" style="left:737.8000000000001px;top:85.19px;font-size:6.27px;letter-spacing:0.26px;color:#111">1.3</div>
<div class="t" style="left:765.4px;top:85.19px;font-size:6.27px;letter-spacing:0.26px;color:#111">Z</div>
<div class="a" style="left:771.3px;top:83.65px;width:26.600000000000023px;height:8.7px;border:0.8px solid #8e8e8e;border-top:1.3px solid #777;background:#b6b6b6"></div>
<div class="t" style="left:772.9px;top:85.19px;font-size:6.27px;letter-spacing:0.26px;color:#111">0</div>
<div class="t" style="left:641.7px;top:94.79px;font-size:6.27px;letter-spacing:0.26px;color:#222">Rotation</div>
<div class="t" style="left:695.4px;top:94.79px;font-size:6.27px;letter-spacing:0.26px;color:#111">X</div>
<div class="a" style="left:701.2px;top:93.25px;width:26.09999999999991px;height:8.7px;border:0.8px solid #8e8e8e;border-top:1.3px solid #777;background:#b6b6b6"></div>
<div class="t" style="left:702.8000000000001px;top:94.79px;font-size:6.27px;letter-spacing:0.26px;color:#111">0</div>
<div class="t" style="left:729.9px;top:94.79px;font-size:6.27px;letter-spacing:0.26px;color:#111">Y</div>
<div class="a" style="left:736.2px;top:93.25px;width:26.199999999999932px;height:8.7px;border:0.8px solid #8e8e8e;border-top:1.3px solid #777;background:#b6b6b6"></div>
<div class="t" style="left:737.8000000000001px;top:94.79px;font-size:6.27px;letter-spacing:0.26px;color:#111">0</div>
<div class="t" style="left:765.4px;top:94.79px;font-size:6.27px;letter-spacing:0.26px;color:#111">Z</div>
<div class="a" style="left:771.3px;top:93.25px;width:26.600000000000023px;height:8.7px;border:0.8px solid #8e8e8e;border-top:1.3px solid #777;background:#b6b6b6"></div>
<div class="t" style="left:772.9px;top:94.79px;font-size:6.27px;letter-spacing:0.26px;color:#111">0</div>
<div class="t" style="left:641.7px;top:104.39px;font-size:6.27px;letter-spacing:0.26px;color:#222">Scale</div>
<div class="t" style="left:695.4px;top:104.39px;font-size:6.27px;letter-spacing:0.26px;color:#111">X</div>
<div class="a" style="left:701.2px;top:102.85000000000001px;width:26.09999999999991px;height:8.7px;border:0.8px solid #8e8e8e;border-top:1.3px solid #777;background:#b6b6b6"></div>
<div class="t" style="left:702.8000000000001px;top:104.39px;font-size:6.27px;letter-spacing:0.26px;color:#111">1</div>
<div class="t" style="left:729.9px;top:104.39px;font-size:6.27px;letter-spacing:0.26px;color:#111">Y</div>
<div class="a" style="left:736.2px;top:102.85000000000001px;width:26.199999999999932px;height:8.7px;border:0.8px solid #8e8e8e;border-top:1.3px solid #777;background:#b6b6b6"></div>
<div class="t" style="left:737.8000000000001px;top:104.39px;font-size:6.27px;letter-spacing:0.26px;color:#111">1</div>
<div class="t" style="left:765.4px;top:104.39px;font-size:6.27px;letter-spacing:0.26px;color:#111">Z</div>
<div class="a" style="left:771.3px;top:102.85000000000001px;width:26.600000000000023px;height:8.7px;border:0.8px solid #8e8e8e;border-top:1.3px solid #777;background:#b6b6b6"></div>
<div class="t" style="left:772.9px;top:104.39px;font-size:6.27px;letter-spacing:0.26px;color:#111">1</div>
<div class="a" style="left:634.5px;top:115px;width:165.5px;height:0.8px;background:#7e7e7e"></div>
<svg style="left:637.6px;top:117.8px" width="4" height="3.5" viewBox="0 0 8 7"><path d="M0,0 L8,0 L4,7Z" fill="#555"/></svg>
<svg style="left:643px;top:116.5px" width="8" height="6" viewBox="0 0 16 12"><ellipse cx="7" cy="6" rx="6" ry="4" fill="#7c8ea0"/><path d="M12,6 L16,2 L16,10Z" fill="#5d6f80"/></svg>
<div class="a" style="left:652.3px;top:116.6px;width:5.8px;height:6px;border:0.8px solid #7a7a7a;border-radius:1px;background:#c8c8c8"></div>
<div class="t" style="left:660px;top:116.79px;font-size:6.74px;letter-spacing:0.26px;font-weight:bold;color:#111">Camera</div>
<svg style="left:772px;top:115.8px" width="6.5" height="7.5" viewBox="0 0 13 15"><path d="M1,2.5 L8.5,0.5 L12,2 L12,13 L4.5,14.5 L1,13Z" fill="#6f9bd6"/><path d="M4.5,3.8 L12,2 L12,13 L4.5,14.5Z" fill="#4a78b8"/><path d="M1,2.5 L4.5,3.8 L4.5,14.5" stroke="#2c4a78" stroke-width="0.8" fill="none"/><path d="M6,6 L10.5,5" stroke="#cde" stroke-width="0.8"/></svg>
<svg style="left:781.5px;top:116.6px" width="6" height="6" viewBox="0 0 12 12"><path d="M1,3 H11 M1,8 H11" stroke="#333" stroke-width="1.5"/><rect x="6" y="1" width="2.4" height="4" fill="#333"/><rect x="2.5" y="6" width="2.4" height="4" fill="#333"/></svg>
<svg style="left:791px;top:116.39999999999999px" width="7" height="6.5" viewBox="0 0 14 13"><circle cx="6" cy="6" r="3.6" fill="none" stroke="#222" stroke-width="2.4" stroke-dasharray="1.6,1"/><circle cx="6" cy="6" r="1.2" fill="#222"/><path d="M10,11 L12,9 L14,11Z" fill="#222"/></svg>
<div class="t" style="left:641.8px;top:125.69px;font-size:6.27px;letter-spacing:0.26px;color:#222">Clear Flags</div>
<div class="a" style="left:705.4px;top:124.9px;width:91.39999999999998px;height:7.4px;border:0.8px solid #828282;border-radius:1.5px;background:linear-gradient(#cdcdcd,#b9b9b9)"></div>
<div class="t" style="left:708.0px;top:126.06px;font-size:5.60px;letter-spacing:0.2px;color:#333;-webkit-text-stroke:0.08px #333">Skybox</div>
<svg style="left:792.4px;top:126.5px" width="2.6" height="4.4" viewBox="0 0 4 8"><path d="M0,3.2 L2,0.4 L4,3.2Z M0,4.8 L2,7.6 L4,4.8Z" fill="#333"/></svg>
<div class="t" style="left:641.8px;top:135.09px;font-size:6.27px;letter-spacing:0.26px;color:#222">Background</div>
<div class="a" style="left:705.5px;top:134px;width:82.1px;height:6.9px;background:#000"></div>
<div class="a" style="left:705.5px;top:134px;width:82.1px;height:5.7px;background:#31548a"></div>
<svg style="left:789.5px;top:134px" width="7" height="7.5" viewBox="0 0 14 15"><path d="M2,13 L9,5 M8,3 L12,7" stroke="#333" stroke-width="1.8"/><path d="M10,2 L12,0.5 L13.5,2 L12,4Z" fill="#333"/></svg>
<div class="t" style="left:641.8px;top:144.59px;font-size:6.27px;letter-spacing:0.26px;color:#222">Culling Mask</div>
<div class="a" style="left:705.4px;top:143.8px;width:91.39999999999998px;height:7.4px;border:0.8px solid #828282;border-radius:1.5px;background:linear-gradient(#cdcdcd,#b9b9b9)"></div>
<div class="t" style="left:708.0px;top:144.96px;font-size:5.60px;letter-spacing:0.2px;color:#333;-webkit-text-stroke:0.08px #333">Everything</div>
<svg style="left:792.4px;top:145.4px" width="2.6" height="4.4" viewBox="0 0 4 8"><path d="M0,3.2 L2,0.4 L4,3.2Z M0,4.8 L2,7.6 L4,4.8Z" fill="#333"/></svg>
<div class="t" style="left:641.8px;top:158.49px;font-size:6.27px;letter-spacing:0.26px;color:#222">Projection</div>
<div class="a" style="left:705.4px;top:157.70000000000002px;width:91.39999999999998px;height:7.4px;border:0.8px solid #828282;border-radius:1.5px;background:linear-gradient(#cdcdcd,#b9b9b9)"></div>
<div class="t" style="left:708.0px;top:158.86px;font-size:5.60px;letter-spacing:0.2px;color:#333;-webkit-text-stroke:0.08px #333">Perspective</div>
<svg style="left:792.4px;top:159.3px" width="2.6" height="4.4" viewBox="0 0 4 8"><path d="M0,3.2 L2,0.4 L4,3.2Z M0,4.8 L2,7.6 L4,4.8Z" fill="#333"/></svg>
<div class="t" style="left:641.8px;top:167.99px;font-size:6.27px;letter-spacing:0.26px;color:#222">Field of View</div>
<div class="a" style="left:705px;top:170.3px;width:62.5px;height:1px;background:#6d6d6d"></div>
<svg style="left:723.9px;top:167.6px" width="6" height="6" viewBox="0 0 12 12"><circle cx="6" cy="6" r="5" fill="#e8e8e8" stroke="#666" stroke-width="1.2"/></svg>
<div class="a" style="left:771.2px;top:166.45000000000002px;width:26.299999999999955px;height:8.7px;border:0.8px solid #8e8e8e;border-top:1.3px solid #777;background:#b6b6b6"></div>
<div class="t" style="left:772.8000000000001px;top:167.99px;font-size:6.27px;letter-spacing:0.26px;color:#111">60</div>
<div class="t" style="left:641.8px;top:177.59px;font-size:6.27px;letter-spacing:0.26px;color:#222">Physical Camera</div>
<div class="a" style="left:705.6px;top:177.3px;width:6.4px;height:6.2px;border:0.8px solid #666;border-radius:1px;background:linear-gradient(#cfcfcf,#bdbdbd)"></div>
<div class="t" style="left:641.8px;top:191.69px;font-size:6.27px;letter-spacing:0.26px;color:#222">Clipping Planes</div>
<div class="t" style="left:706px;top:191.69px;font-size:6.27px;letter-spacing:0.26px;color:#111">Near</div>
<div class="a" style="left:724px;top:190.15px;width:73.5px;height:8.7px;border:0.8px solid #8e8e8e;border-top:1.3px solid #777;background:#b6b6b6"></div>
<div class="t" style="left:725.6px;top:191.69px;font-size:6.27px;letter-spacing:0.26px;color:#111">0.3</div>
<div class="t" style="left:706px;top:200.09px;font-size:6.27px;letter-spacing:0.26px;color:#111">Far</div>
<div class="a" style="left:724px;top:198.55px;width:73.5px;height:8.7px;border:0.8px solid #8e8e8e;border-top:1.3px solid #777;background:#b6b6b6"></div>
<div class="t" style="left:725.6px;top:200.09px;font-size:6.27px;letter-spacing:0.26px;color:#111">1000</div>
<div class="t" style="left:641.8px;top:209.69px;font-size:6.27px;letter-spacing:0.26px;color:#222">Viewport Rect</div>
<div class="t" style="left:651px;top:218.19px;font-size:6.27px;letter-spacing:0.26px;color:#111">X</div>
<div class="a" style="left:656px;top:216.65px;width:66.39999999999998px;height:8.7px;border:0.8px solid #8e8e8e;border-top:1.3px solid #777;background:#b6b6b6"></div>
<div class="t" style="left:657.6px;top:218.19px;font-size:6.27px;letter-spacing:0.26px;color:#111">0</div>
<div class="t" style="left:726.8px;top:218.19px;font-size:6.27px;letter-spacing:0.26px;color:#111">Y</div>
<div class="a" style="left:731px;top:216.65px;width:66.5px;height:8.7px;border:0.8px solid #8e8e8e;border-top:1.3px solid #777;background:#b6b6b6"></div>
<div class="t" style="left:732.6px;top:218.19px;font-size:6.27px;letter-spacing:0.26px;color:#111">0</div>
<div class="t" style="left:650px;top:227.19px;font-size:6.27px;letter-spacing:0.26px;color:#111">W</div>
<div class="a" style="left:656px;top:225.65px;width:66.39999999999998px;height:8.7px;border:0.8px solid #8e8e8e;border-top:1.3px solid #777;background:#b6b6b6"></div>
<div class="t" style="left:657.6px;top:227.19px;font-size:6.27px;letter-spacing:0.26px;color:#111">1</div>
<div class="t" style="left:726.8px;top:227.19px;font-size:6.27px;letter-spacing:0.26px;color:#111">H</div>
<div class="a" style="left:731px;top:225.65px;width:66.5px;height:8.7px;border:0.8px solid #8e8e8e;border-top:1.3px solid #777;background:#b6b6b6"></div>
<div class="t" style="left:732.6px;top:227.19px;font-size:6.27px;letter-spacing:0.26px;color:#111">1</div>
<div class="t" style="left:641.8px;top:240.79px;font-size:6.27px;letter-spacing:0.26px;color:#222">Depth</div>
<div class="a" style="left:705.4px;top:239.25px;width:92.10000000000002px;height:8.7px;border:0.8px solid #8e8e8e;border-top:1.3px solid #777;background:#b6b6b6"></div>
<div class="t" style="left:707.0px;top:240.79px;font-size:6.27px;letter-spacing:0.26px;color:#111">0</div>
<div class="t" style="left:641.8px;top:250.39px;font-size:6.27px;letter-spacing:0.26px;color:#222">Rendering Path</div>
<div class="a" style="left:705.4px;top:249.6px;width:91.39999999999998px;height:7.4px;border:0.8px solid #828282;border-radius:1.5px;background:linear-gradient(#cdcdcd,#b9b9b9)"></div>
<div class="t" style="left:708.0px;top:250.76px;font-size:5.60px;letter-spacing:0.2px;color:#333;-webkit-text-stroke:0.08px #333">Use Graphics Settings</div>
<svg style="left:792.4px;top:251.2px" width="2.6" height="4.4" viewBox="0 0 4 8"><path d="M0,3.2 L2,0.4 L4,3.2Z M0,4.8 L2,7.6 L4,4.8Z" fill="#333"/></svg>
<div class="t" style="left:641.8px;top:259.89px;font-size:6.27px;letter-spacing:0.26px;color:#222">Target Texture</div>
<div class="a" style="left:705.4px;top:258.34999999999997px;width:82.20000000000005px;height:8.7px;border:0.8px solid #8e8e8e;border-top:1.3px solid #777;background:#b6b6b6"></div>
<div class="t" style="left:707.0px;top:259.89px;font-size:6.27px;letter-spacing:0.26px;color:#111">None (Render Texture)</div>
<svg style="left:791.5px;top:260.2px" width="5" height="5" viewBox="0 0 10 10"><circle cx="5" cy="5" r="3.8" fill="none" stroke="#555" stroke-width="1.2"/><circle cx="5" cy="5" r="1.2" fill="#555"/></svg>
<div class="t" style="left:641.8px;top:269.79px;font-size:6.27px;letter-spacing:0.26px;color:#222">Occlusion Culling</div>
<div class="a" style="left:705.6px;top:269.5px;width:6.4px;height:6.2px;border:0.8px solid #666;border-radius:1px;background:linear-gradient(#9fb2cc,#7590b4)"></div>
<svg style="left:706.2px;top:268.70000000000005px" width="6.4" height="6.6" viewBox="0 0 12 12"><path d="M2.2,6.3 L5,9.6 L11,1" stroke="#0d0d14" stroke-width="1.9" fill="none"/></svg>
<div class="t" style="left:641.8px;top:279.39px;font-size:6.27px;letter-spacing:0.26px;color:#222">Allow HDR</div>
<div class="a" style="left:705.6px;top:279.09999999999997px;width:6.4px;height:6.2px;border:0.8px solid #666;border-radius:1px;background:linear-gradient(#9fb2cc,#7590b4)"></div>
<svg style="left:706.2px;top:278.3px" width="6.4" height="6.6" viewBox="0 0 12 12"><path d="M2.2,6.3 L5,9.6 L11,1" stroke="#0d0d14" stroke-width="1.9" fill="none"/></svg>
<div class="t" style="left:641.8px;top:288.99px;font-size:6.27px;letter-spacing:0.26px;color:#222">Allow MSAA</div>
<div class="a" style="left:705.6px;top:288.7px;width:6.4px;height:6.2px;border:0.8px solid #666;border-radius:1px;background:linear-gradient(#9fb2cc,#7590b4)"></div>
<svg style="left:706.2px;top:287.90000000000003px" width="6.4" height="6.6" viewBox="0 0 12 12"><path d="M2.2,6.3 L5,9.6 L11,1" stroke="#0d0d14" stroke-width="1.9" fill="none"/></svg>
<div class="a" style="left:641.8px;top:296px;width:62.6px;height:10px;overflow:hidden"><div class="t" style="left:0;top:1.6px;font-size:6.27px;letter-spacing:0.26px;color:#222">Allow Dynamic Resolution</div></div>
<div class="a" style="left:705.6px;top:298.2px;width:6.4px;height:6.2px;border:0.8px solid #666;border-radius:1px;background:linear-gradient(#cfcfcf,#bdbdbd)"></div>
<div class="t" style="left:641.8px;top:308.19px;font-size:6.27px;letter-spacing:0.26px;color:#222">Stereo Separation</div>
<div class="a" style="left:705.4px;top:306.65px;width:92.10000000000002px;height:8.7px;border:0.8px solid #8e8e8e;border-top:1.3px solid #777;background:#b6b6b6"></div>
<div class="t" style="left:707.0px;top:308.19px;font-size:6.27px;letter-spacing:0.26px;color:#111">0.022</div>
<div class="t" style="left:641.8px;top:317.79px;font-size:6.27px;letter-spacing:0.26px;color:#222">Stereo Convergence</div>
<div class="a" style="left:705.4px;top:316.25px;width:92.10000000000002px;height:8.7px;border:0.8px solid #8e8e8e;border-top:1.3px solid #777;background:#b6b6b6"></div>
<div class="t" style="left:707.0px;top:317.79px;font-size:6.27px;letter-spacing:0.26px;color:#111">10</div>
<div class="t" style="left:641.8px;top:331.79px;font-size:6.27px;letter-spacing:0.26px;color:#222">Target Display</div>
<div class="a" style="left:705.4px;top:331.0px;width:91.39999999999998px;height:7.4px;border:0.8px solid #828282;border-radius:1.5px;background:linear-gradient(#cdcdcd,#b9b9b9)"></div>
<div class="t" style="left:708.0px;top:332.16px;font-size:5.60px;letter-spacing:0.2px;color:#333;-webkit-text-stroke:0.08px #333">Display 1</div>
<svg style="left:792.4px;top:332.6px" width="2.6" height="4.4" viewBox="0 0 4 8"><path d="M0,3.2 L2,0.4 L4,3.2Z M0,4.8 L2,7.6 L4,4.8Z" fill="#333"/></svg>
<div class="t" style="left:641.8px;top:341.19px;font-size:6.27px;letter-spacing:0.26px;color:#222">Target Eye</div>
<div class="a" style="left:705.4px;top:340.4px;width:91.39999999999998px;height:7.4px;border:0.8px solid #828282;border-radius:1.5px;background:linear-gradient(#cdcdcd,#b9b9b9)"></div>
<div class="t" style="left:708.0px;top:341.56px;font-size:5.60px;letter-spacing:0.2px;color:#333;-webkit-text-stroke:0.08px #333">Right</div>
<svg style="left:792.4px;top:342px" width="2.6" height="4.4" viewBox="0 0 4 8"><path d="M0,3.2 L2,0.4 L4,3.2Z M0,4.8 L2,7.6 L4,4.8Z" fill="#333"/></svg>
<div class="a" style="left:634.5px;top:349.8px;width:165.5px;height:0.8px;background:#7e7e7e"></div>
<div class="a" style="left:654.2px;top:355.2px;width:122.6px;height:11.5px;border:0.8px solid #7a7a7a;border-radius:2px;background:linear-gradient(#dedede,#c2c2c2)"></div>
<div class="t" style="left:690.2px;top:357.67px;font-size:6.65px;letter-spacing:0.26px;color:#111">Add Component</div>
<div class="a" style="left:0px;top:502.5px;width:800px;height:7.5px;background:#8a8a8a;border-top:0.8px solid #777"></div>
<svg style="left:0.5px;top:504.5px" width="6" height="6" viewBox="0 0 12 12"><circle cx="6" cy="6" r="5.4" fill="#eee" stroke="#555" stroke-width="1"/><rect x="5.2" y="5" width="1.6" height="5" fill="#333"/><rect x="5.2" y="2.3" width="1.6" height="1.6" fill="#333"/></svg>
<div class="t" style="left:7.5px;top:506.79px;font-size:6.27px;letter-spacing:0.26px;color:#111">[OVRManager] OnApplicationFocus(true)</div>
</body></html>
